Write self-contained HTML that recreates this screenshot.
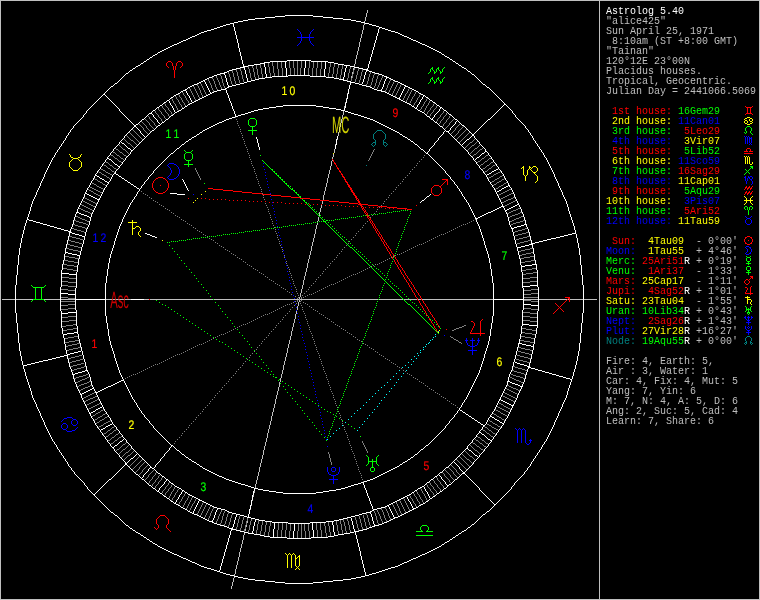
<!DOCTYPE html>
<html lang="en">
<head>
<meta charset="utf-8">
<title>Astrolog 5.40 - alice425</title>
<style>
html,body{margin:0;padding:0;background:#000;}
body{width:760px;height:600px;overflow:hidden;position:relative;}
#chart{position:absolute;left:0;top:0;display:block;will-change:transform;}
#info{position:absolute;left:605.5px;top:7px;margin:0;width:154px;
 font-family:"Liberation Mono",monospace;font-size:10px;line-height:10px;
 color:#bfbfbf;letter-spacing:0;}
#info div{height:10px;white-space:pre;}
#info{will-change:transform;}
.w{color:#fff}.r{color:#f00}.y{color:#ff0}.g{color:#0f0}.b{color:#00f}.c{color:#007f7f}.l{color:#bfbfbf}
</style>
</head>
<body>
<svg id="chart" width="760" height="600" viewBox="0 0 760 600" shape-rendering="crispEdges" fill="none" stroke-width="1" stroke-linecap="butt">
<g transform="translate(0 .5)">
<path stroke="#bfbfbf" d="M367 10h1M367 11h1M367 12h1M366 13h1M366 14h1M366 15h1M366 16h1M365 17h1M365 18h1M365 19h1M365 20h1M364 21h1M364 22h1M364 23h1M364 24h1M363 25h1M363 26h1M363 27h1M363 28h1M363 29h1M362 30h1M362 31h1M362 32h1M362 33h1M361 34h1M361 35h1M361 36h1M361 37h1M360 38h1M360 39h1M360 40h1M360 41h1M359 42h1M359 43h1M359 44h1M359 45h1M359 46h1M358 47h1M358 48h1M358 49h1M358 50h1M357 51h1M357 52h1M357 53h1M357 54h1M356 55h1M356 56h1M356 57h1M356 58h1M355 59h1M355 60h1M355 61h1M355 62h1M355 63h1M354 64h1M354 65h1M354 66h1M354 67h1M353 68h1M353 69h1M353 70h1M353 71h1M352 72h1M352 73h1M352 74h1M352 75h1M351 76h1M351 77h1M351 78h1M351 79h1M351 80h1M350 81h1M350 82h1M350 83h1M350 84h1M349 85h1M349 86h1M349 87h1M349 88h1M348 89h1M348 90h1M348 91h1M348 92h1M347 93h1M347 94h1M347 95h1M347 96h1M347 97h1M346 98h1M346 99h1M346 100h1M346 101h1M345 102h1M345 103h1M345 104h1M345 105h1M344 106h1M344 107h1M344 108h1M344 109h1M343 110h1M343 111h1M343 112h1M343 113h1M343 114h1M342 115h1M342 116h1M342 117h1M342 118h1M341 119h1M341 120h1M341 121h1M341 122h1M340 123h1M340 124h1M340 125h1M340 126h1M339 127h1M339 128h1M339 129h1M339 130h1M339 131h1M338 132h1M338 133h1M338 134h1M338 135h1M337 136h1M337 137h1M337 138h1M337 139h1M336 140h1M336 141h1M336 142h1M336 143h1M335 144h1M335 145h1M335 146h1M335 147h1M335 148h1M334 149h1M334 150h1M334 151h1M334 152h1M333 153h1M333 154h1M333 155h1M333 156h1M332 157h1M332 158h1M332 159h1M332 160h1M331 161h1M331 162h1M331 163h1M331 164h1M331 165h1M330 166h1M330 167h1M330 168h1M330 169h1M329 170h1M329 171h1M329 172h1M329 173h1M328 174h1M328 175h1M328 176h1M328 177h1M327 178h1M327 179h1M327 180h1M327 181h1M327 182h1M326 183h1M326 184h1M326 185h1M326 186h1M325 187h1M325 188h1M325 189h1M325 190h1M324 191h1M324 192h1M324 193h1M324 194h1M323 195h1M323 196h1M323 197h1M323 198h1M323 199h1M322 200h1M322 201h1M322 202h1M322 203h1M321 204h1M321 205h1M321 206h1M321 207h1M320 208h1M320 209h1M320 210h1M320 211h1M319 212h1M319 213h1M319 214h1M319 215h1M319 216h1M318 217h1M318 218h1M318 219h1M318 220h1M317 221h1M317 222h1M317 223h1M317 224h1M316 225h1M316 226h1M316 227h1M316 228h1M315 229h1M315 230h1M315 231h1M315 232h1M315 233h1M314 234h1M314 235h1M314 236h1M314 237h1M313 238h1M313 239h1M313 240h1M313 241h1M312 242h1M312 243h1M312 244h1M312 245h1M311 246h1M311 247h1M311 248h1M311 249h1M311 250h1M310 251h1M310 252h1M310 253h1M310 254h1M309 255h1M309 256h1M309 257h1M309 258h1M308 259h1M308 260h1M308 261h1M308 262h1M307 263h1M307 264h1M307 265h1M307 266h1M307 267h1M306 268h1M306 269h1M306 270h1M306 271h1M305 272h1M305 273h1M305 274h1M305 275h1M304 276h1M304 277h1M304 278h1M304 279h1M303 280h1M303 281h1M303 282h1M303 283h1M303 284h1M302 285h1M302 286h1M302 287h1M302 288h1M301 289h1M301 290h1M301 291h1M301 292h1M300 293h1M300 294h1M300 295h1M300 296h1M299 297h1M299 298h1M2 299h595M299 300h1M299 301h1M298 302h1M298 303h1M298 304h1M298 305h1M297 306h1M297 307h1M297 308h1M297 309h1M296 310h1M296 311h1M296 312h1M296 313h1M295 314h1M295 315h1M295 316h1M295 317h1M295 318h1M294 319h1M294 320h1M294 321h1M294 322h1M293 323h1M293 324h1M293 325h1M293 326h1M292 327h1M292 328h1M292 329h1M292 330h1M291 331h1M291 332h1M291 333h1M291 334h1M291 335h1M290 336h1M290 337h1M290 338h1M290 339h1M289 340h1M289 341h1M289 342h1M289 343h1M288 344h1M288 345h1M288 346h1M288 347h1M287 348h1M287 349h1M287 350h1M287 351h1M287 352h1M286 353h1M286 354h1M286 355h1M286 356h1M285 357h1M285 358h1M285 359h1M285 360h1M284 361h1M284 362h1M284 363h1M284 364h1M283 365h1M283 366h1M283 367h1M283 368h1M283 369h1M282 370h1M282 371h1M282 372h1M282 373h1M281 374h1M281 375h1M281 376h1M281 377h1M280 378h1M280 379h1M280 380h1M280 381h1M279 382h1M279 383h1M279 384h1M279 385h1M279 386h1M278 387h1M278 388h1M278 389h1M278 390h1M277 391h1M277 392h1M277 393h1M277 394h1M276 395h1M276 396h1M276 397h1M276 398h1M275 399h1M275 400h1M275 401h1M275 402h1M275 403h1M274 404h1M274 405h1M274 406h1M274 407h1M273 408h1M273 409h1M273 410h1M273 411h1M272 412h1M272 413h1M272 414h1M272 415h1M271 416h1M271 417h1M271 418h1M271 419h1M271 420h1M270 421h1M270 422h1M270 423h1M270 424h1M269 425h1M269 426h1M269 427h1M269 428h1M268 429h1M268 430h1M268 431h1M268 432h1M267 433h1M267 434h1M267 435h1M267 436h1M267 437h1M266 438h1M266 439h1M266 440h1M266 441h1M265 442h1M265 443h1M265 444h1M265 445h1M264 446h1M264 447h1M264 448h1M264 449h1M263 450h1M263 451h1M263 452h1M263 453h1M263 454h1M262 455h1M262 456h1M262 457h1M262 458h1M261 459h1M261 460h1M261 461h1M261 462h1M260 463h1M260 464h1M260 465h1M260 466h1M259 467h1M259 468h1M259 469h1M259 470h1M259 471h1M258 472h1M258 473h1M258 474h1M258 475h1M257 476h1M257 477h1M257 478h1M257 479h1M256 480h1M256 481h1M256 482h1M256 483h1M255 484h1M255 485h1M255 486h1M255 487h1M255 488h1M254 489h1M254 490h1M254 491h1M254 492h1M253 493h1M253 494h1M253 495h1M253 496h1M252 497h1M252 498h1M252 499h1M252 500h1M251 501h1M251 502h1M251 503h1M251 504h1M251 505h1M250 506h1M250 507h1M250 508h1M250 509h1M249 510h1M249 511h1M249 512h1M249 513h1M248 514h1M248 515h1M248 516h1M248 517h1M247 518h1M247 519h1M247 520h1M247 521h1M247 522h1M246 523h1M246 524h1M246 525h1M246 526h1M245 527h1M245 528h1M245 529h1M245 530h1M244 531h1M244 532h1M244 533h1M244 534h1M243 535h1M243 536h1M243 537h1M243 538h1M243 539h1M242 540h1M242 541h1M242 542h1M242 543h1M241 544h1M241 545h1M241 546h1M241 547h1M240 548h1M240 549h1M240 550h1M240 551h1M239 552h1M239 553h1M239 554h1M239 555h1M239 556h1M238 557h1M238 558h1M238 559h1M238 560h1M237 561h1M237 562h1M237 563h1M237 564h1M236 565h1M236 566h1M236 567h1M236 568h1M235 569h1M235 570h1M235 571h1M235 572h1M235 573h1M234 574h1M234 575h1M234 576h1M234 577h1M233 578h1M233 579h1M233 580h1M233 581h1M232 582h1M232 583h1M232 584h1M232 585h1M231 586h1M231 587h1M231 588h1"/>
<path stroke="#7f7f7f" d="M281 61h1M289 61h1M293 61h1M297 61h1M301 61h1M309 61h1M313 61h1M317 61h1M272 62h1M277 62h1M281 62h1M289 62h1M293 62h1M297 62h1M301 62h1M309 62h1M313 62h1M317 62h1M321 62h1M268 63h1M272 63h1M277 63h1M281 63h1M289 63h1M293 63h1M297 63h1M301 63h1M309 63h1M313 63h1M317 63h1M321 63h1M330 63h1M334 63h1M260 64h1M268 64h1M272 64h1M277 64h1M281 64h1M289 64h1M293 64h1M297 64h1M301 64h1M309 64h1M313 64h1M317 64h1M321 64h1M330 64h1M334 64h1M338 64h1M252 65h1M256 65h1M260 65h1M268 65h1M272 65h1M277 65h1M281 65h1M289 65h1M293 65h1M297 65h1M301 65h1M309 65h1M313 65h1M317 65h1M321 65h1M330 65h1M334 65h1M338 65h1M342 65h1M248 66h1M252 66h1M256 66h1M260 66h1M268 66h1M273 66h1M277 66h1M281 66h1M289 66h1M293 66h1M297 66h1M301 66h1M309 66h1M313 66h1M317 66h1M321 66h1M330 66h1M334 66h1M338 66h1M342 66h1M350 66h1M248 67h1M252 67h1M256 67h1M260 67h1M269 67h1M273 67h1M277 67h1M281 67h1M289 67h1M293 67h1M297 67h1M301 67h1M309 67h1M313 67h1M317 67h1M321 67h1M329 67h1M333 67h1M338 67h1M342 67h1M350 67h1M354 67h1M240 68h1M248 68h1M253 68h1M256 68h1M261 68h1M269 68h1M273 68h1M277 68h1M282 68h1M290 68h1M294 68h1M297 68h1M300 68h1M308 68h1M312 68h1M316 68h1M321 68h1M329 68h1M333 68h1M337 68h1M342 68h1M350 68h1M354 68h1M358 68h1M236 69h1M240 69h1M249 69h1M253 69h1M257 69h1M261 69h1M269 69h1M273 69h1M278 69h1M282 69h1M290 69h1M294 69h1M297 69h1M300 69h1M308 69h1M312 69h1M316 69h1M320 69h1M329 69h1M333 69h1M337 69h1M341 69h1M349 69h1M354 69h1M358 69h1M362 69h1M232 70h1M236 70h1M240 70h1M249 70h1M253 70h1M257 70h1M261 70h1M269 70h1M273 70h1M278 70h1M282 70h1M290 70h1M294 70h1M297 70h1M300 70h1M308 70h1M312 70h1M316 70h1M320 70h1M329 70h1M333 70h1M337 70h1M341 70h1M349 70h1M353 70h1M358 70h1M362 70h1M232 71h1M236 71h1M241 71h1M249 71h1M253 71h1M257 71h1M261 71h1M269 71h1M273 71h1M278 71h1M282 71h1M290 71h1M294 71h1M297 71h1M300 71h1M308 71h1M312 71h1M316 71h1M320 71h1M329 71h1M333 71h1M337 71h1M341 71h1M349 71h1M353 71h1M357 71h1M362 71h1M228 72h1M232 72h1M237 72h1M241 72h1M249 72h1M254 72h1M257 72h1M261 72h1M269 72h1M273 72h1M278 72h1M282 72h1M290 72h1M294 72h1M297 72h1M300 72h1M308 72h1M312 72h1M316 72h1M320 72h1M329 72h1M333 72h1M337 72h1M341 72h1M349 72h1M353 72h1M357 72h1M361 72h1M370 72h1M228 73h1M233 73h1M237 73h1M241 73h1M250 73h1M254 73h1M257 73h1M261 73h1M270 73h1M274 73h1M278 73h1M282 73h1M290 73h1M294 73h1M297 73h1M300 73h1M308 73h1M312 73h1M316 73h1M320 73h1M328 73h1M333 73h1M337 73h1M341 73h1M348 73h1M353 73h1M357 73h1M361 73h1M370 73h1M374 73h1M220 74h1M229 74h1M233 74h1M237 74h1M241 74h1M250 74h1M254 74h1M257 74h1M262 74h1M270 74h1M274 74h1M278 74h1M282 74h1M290 74h1M294 74h1M297 74h1M300 74h1M308 74h1M312 74h1M316 74h1M320 74h1M328 74h1M332 74h1M336 74h1M341 74h1M348 74h1M352 74h1M357 74h1M361 74h1M369 74h1M374 74h1M378 74h1M220 75h1M229 75h1M233 75h1M237 75h1M242 75h1M250 75h1M254 75h1M258 75h1M262 75h1M270 75h1M274 75h1M278 75h1M282 75h1M312 75h1M316 75h1M320 75h1M328 75h1M332 75h1M336 75h1M340 75h1M348 75h1M352 75h1M356 75h1M361 75h1M369 75h1M373 75h1M378 75h1M216 76h1M221 76h1M229 76h1M233 76h1M238 76h1M242 76h1M250 76h1M254 76h1M258 76h1M262 76h1M270 76h1M274 76h1M328 76h1M332 76h1M336 76h1M340 76h1M348 76h1M352 76h1M356 76h1M360 76h1M369 76h1M373 76h1M377 76h1M382 76h1M212 77h1M216 77h1M221 77h1M230 77h1M234 77h1M238 77h1M242 77h1M250 77h1M255 77h1M258 77h1M262 77h1M332 77h1M336 77h1M340 77h1M348 77h1M352 77h1M356 77h1M360 77h1M368 77h1M373 77h1M377 77h1M382 77h1M212 78h1M217 78h1M221 78h1M230 78h1M234 78h1M238 78h1M242 78h1M251 78h1M255 78h1M258 78h1M340 78h1M347 78h1M351 78h1M356 78h1M360 78h1M368 78h1M372 78h1M377 78h1M381 78h1M208 79h1M213 79h1M217 79h1M222 79h1M230 79h1M234 79h1M238 79h1M243 79h1M251 79h1M255 79h1M347 79h1M351 79h1M355 79h1M360 79h1M368 79h1M372 79h1M376 79h1M381 79h1M390 79h1M208 80h1M213 80h1M218 80h1M222 80h1M230 80h1M234 80h1M239 80h1M243 80h1M251 80h1M347 80h1M351 80h1M355 80h1M359 80h1M368 80h1M372 80h1M376 80h1M380 80h1M390 80h1M394 80h1M209 81h1M214 81h1M218 81h1M222 81h1M231 81h1M235 81h1M239 81h1M243 81h1M355 81h1M359 81h1M367 81h1M372 81h1M376 81h1M380 81h1M389 81h1M394 81h1M200 82h1M209 82h1M214 82h1M219 82h1M222 82h1M231 82h1M235 82h1M239 82h1M359 82h1M367 82h1M371 82h1M376 82h1M379 82h1M389 82h1M393 82h1M398 82h1M200 83h1M210 83h1M214 83h1M219 83h1M223 83h1M231 83h1M235 83h1M367 83h1M371 83h1M375 83h1M379 83h1M388 83h1M393 83h1M397 83h1M197 84h1M201 84h1M210 84h1M215 84h1M219 84h1M223 84h1M232 84h1M366 84h1M371 84h1M375 84h1M379 84h1M388 84h1M392 84h1M397 84h1M401 84h1M197 85h1M201 85h1M211 85h1M215 85h1M220 85h1M223 85h1M232 85h1M366 85h1M370 85h1M375 85h1M378 85h1M387 85h1M392 85h1M396 85h1M400 85h1M193 86h1M198 86h1M202 86h1M211 86h1M215 86h1M220 86h1M224 86h1M370 86h1M374 86h1M378 86h1M387 86h1M391 86h1M396 86h1M400 86h1M194 87h1M198 87h1M202 87h1M211 87h1M216 87h1M221 87h1M224 87h1M374 87h1M377 87h1M387 87h1M391 87h1M395 87h1M399 87h1M189 88h1M194 88h1M199 88h1M203 88h1M212 88h1M216 88h1M221 88h1M377 88h1M386 88h1M390 88h1M395 88h1M399 88h1M409 88h1M190 89h1M195 89h1M199 89h1M203 89h1M212 89h1M217 89h1M386 89h1M390 89h1M394 89h1M398 89h1M408 89h1M412 89h1M190 90h1M195 90h1M200 90h1M204 90h1M213 90h1M217 90h1M385 90h1M389 90h1M394 90h1M398 90h1M408 90h1M411 90h1M191 91h1M196 91h1M200 91h1M204 91h1M213 91h1M385 91h1M389 91h1M393 91h1M397 91h1M407 91h1M411 91h1M416 91h1M182 92h1M191 92h1M196 92h1M200 92h1M205 92h1M388 92h1M393 92h1M397 92h1M407 92h1M410 92h1M415 92h1M183 93h1M192 93h1M197 93h1M201 93h1M205 93h1M388 93h1M392 93h1M396 93h1M406 93h1M410 93h1M415 93h1M178 94h1M183 94h1M192 94h1M197 94h1M201 94h1M206 94h1M392 94h1M396 94h1M405 94h1M409 94h1M414 94h1M420 94h1M179 95h1M184 95h1M193 95h1M198 95h1M202 95h1M206 95h1M395 95h1M405 95h1M409 95h1M414 95h1M419 95h1M175 96h1M179 96h1M185 96h1M193 96h1M198 96h1M202 96h1M395 96h1M404 96h1M408 96h1M413 96h1M419 96h1M176 97h1M180 97h1M185 97h1M194 97h1M199 97h1M404 97h1M408 97h1M412 97h1M418 97h1M171 98h1M176 98h1M181 98h1M186 98h1M194 98h1M199 98h1M403 98h1M407 98h1M412 98h1M417 98h1M427 98h1M172 99h1M177 99h1M181 99h1M186 99h1M195 99h1M403 99h1M407 99h1M411 99h1M417 99h1M426 99h1M172 100h1M178 100h1M182 100h1M187 100h1M195 100h1M402 100h1M406 100h1M411 100h1M416 100h1M426 100h1M430 100h1M173 101h1M178 101h1M182 101h1M188 101h1M406 101h1M410 101h1M416 101h1M425 101h1M429 101h1M173 102h1M179 102h1M183 102h1M188 102h1M410 102h1M415 102h1M424 102h1M429 102h1M164 103h1M174 103h1M179 103h1M184 103h1M189 103h1M409 103h1M414 103h1M424 103h1M428 103h1M434 103h1M165 104h1M175 104h1M180 104h1M184 104h1M414 104h1M423 104h1M428 104h1M433 104h1M161 105h1M165 105h1M175 105h1M181 105h1M185 105h1M413 105h1M423 105h1M427 105h1M433 105h1M437 105h1M162 106h1M166 106h1M176 106h1M181 106h1M422 106h1M426 106h1M432 106h1M436 106h1M157 107h1M162 107h1M167 107h1M176 107h1M182 107h1M421 107h1M426 107h1M431 107h1M436 107h1M158 108h1M163 108h1M168 108h1M177 108h1M421 108h1M425 108h1M430 108h1M435 108h1M158 109h1M164 109h1M168 109h1M177 109h1M420 109h1M425 109h1M430 109h1M434 109h1M154 110h1M159 110h1M165 110h1M169 110h1M178 110h1M424 110h1M429 110h1M433 110h1M444 110h1M155 111h1M160 111h1M165 111h1M170 111h1M424 111h1M428 111h1M433 111h1M443 111h1M155 112h1M161 112h1M166 112h1M171 112h1M423 112h1M427 112h1M432 112h1M443 112h1M447 112h1M156 113h1M161 113h1M167 113h1M171 113h1M427 113h1M431 113h1M442 113h1M446 113h1M157 114h1M162 114h1M168 114h1M172 114h1M426 114h1M430 114h1M441 114h1M446 114h1M147 115h1M158 115h1M163 115h1M168 115h1M430 115h1M440 115h1M445 115h1M450 115h1M148 116h1M158 116h1M164 116h1M169 116h1M429 116h1M440 116h1M444 116h1M449 116h1M149 117h1M159 117h1M164 117h1M439 117h1M443 117h1M449 117h1M144 118h1M149 118h1M160 118h1M165 118h1M438 118h1M443 118h1M448 118h1M454 118h1M145 119h1M150 119h1M161 119h1M437 119h1M442 119h1M447 119h1M453 119h1M146 120h1M151 120h1M161 120h1M437 120h1M441 120h1M446 120h1M452 120h1M141 121h1M147 121h1M152 121h1M162 121h1M436 121h1M440 121h1M446 121h1M451 121h1M142 122h1M148 122h1M153 122h1M440 122h1M445 122h1M450 122h1M138 123h1M143 123h1M149 123h1M154 123h1M439 123h1M444 123h1M449 123h1M460 123h1M139 124h1M144 124h1M149 124h1M154 124h1M443 124h1M449 124h1M459 124h1M140 125h1M145 125h1M150 125h1M155 125h1M443 125h1M448 125h1M458 125h1M141 126h1M146 126h1M151 126h1M156 126h1M442 126h1M447 126h1M457 126h1M463 126h1M142 127h1M146 127h1M152 127h1M446 127h1M456 127h1M462 127h1M143 128h1M147 128h1M153 128h1M445 128h1M455 128h1M461 128h1M132 129h1M143 129h1M148 129h1M455 129h1M460 129h1M466 129h1M133 130h1M144 130h1M149 130h1M454 130h1M459 130h1M465 130h1M134 131h1M145 131h1M150 131h1M453 131h1M458 131h1M464 131h1M129 132h1M135 132h1M146 132h1M452 132h1M458 132h1M463 132h1M469 132h1M130 133h1M136 133h1M147 133h1M451 133h1M457 133h1M462 133h1M468 133h1M131 134h1M137 134h1M456 134h1M461 134h1M467 134h1M126 135h1M132 135h1M138 135h1M455 135h1M460 135h1M466 135h1M127 136h1M133 136h1M139 136h1M454 136h1M459 136h1M465 136h1M128 137h1M134 137h1M140 137h1M458 137h1M464 137h1M123 138h1M129 138h1M135 138h1M141 138h1M457 138h1M463 138h1M475 138h1M124 139h1M130 139h1M136 139h1M142 139h1M456 139h1M462 139h1M474 139h1M125 140h1M131 140h2M137 140h1M461 140h1M473 140h1M126 141h1M133 141h1M138 141h1M460 141h1M472 141h1M477 141h1M127 142h1M134 142h1M139 142h1M459 142h1M470 142h2M476 142h1M128 143h2M135 143h1M469 143h1M475 143h1M118 144h1M130 144h1M136 144h1M468 144h1M474 144h1M480 144h1M119 145h1M131 145h1M467 145h1M472 145h2M479 145h1M120 146h1M132 146h1M466 146h1M471 146h1M478 146h1M121 147h1M133 147h1M465 147h1M470 147h1M477 147h1M483 147h1M115 148h1M122 148h1M469 148h1M475 148h2M482 148h1M116 149h2M123 149h2M468 149h1M474 149h1M480 149h2M118 150h1M125 150h1M467 150h1M473 150h1M479 150h1M112 151h1M119 151h1M126 151h1M472 151h1M478 151h1M113 152h2M120 152h2M127 152h1M471 152h1M477 152h1M115 153h1M122 153h1M128 153h1M470 153h1M476 153h1M110 154h1M116 154h1M123 154h1M474 154h2M488 154h1M111 155h2M117 155h2M124 155h2M473 155h1M486 155h2M113 156h1M119 156h1M126 156h1M472 156h1M485 156h1M114 157h1M120 157h1M484 157h1M491 157h1M115 158h2M121 158h2M482 158h2M489 158h2M117 159h1M123 159h1M481 159h1M488 159h1M118 160h1M480 160h1M487 160h1M105 161h1M119 161h2M478 161h2M485 161h2M493 161h1M106 162h2M121 162h1M477 162h1M484 162h1M491 162h2M108 163h1M483 163h1M490 163h1M103 164h1M109 164h1M481 164h2M489 164h1M495 164h1M104 165h2M110 165h2M480 165h1M487 165h2M493 165h2M106 166h1M112 166h1M486 166h1M492 166h1M107 167h1M113 167h1M485 167h1M491 167h1M100 168h1M108 168h2M114 168h2M483 168h2M489 168h2M101 169h2M110 169h1M116 169h1M482 169h1M488 169h1M103 170h2M111 170h1M487 170h1M98 171h1M105 171h1M112 171h2M485 171h2M500 171h1M99 172h2M106 172h2M114 172h1M484 172h1M498 172h2M101 173h1M108 173h2M496 173h2M102 174h2M110 174h2M494 174h2M104 175h2M112 175h1M493 175h1M502 175h1M106 176h1M491 176h2M500 176h2M107 177h2M489 177h2M499 177h1M94 178h1M109 178h1M488 178h1M497 178h2M504 178h1M95 179h2M495 179h2M502 179h2M97 180h1M494 180h1M501 180h1M98 181h2M492 181h2M499 181h2M91 182h1M100 182h2M491 182h1M497 182h2M506 182h1M92 183h2M102 183h1M496 183h1M504 183h2M94 184h2M103 184h2M494 184h2M503 184h1M96 185h1M105 185h1M493 185h1M501 185h2M89 186h1M97 186h2M499 186h2M90 187h2M99 187h2M498 187h1M92 188h2M101 188h2M496 188h2M88 189h1M94 189h2M103 189h1M495 189h1M509 189h2M89 190h2M96 190h2M507 190h2M91 191h2M98 191h2M505 191h2M93 192h1M100 192h2M503 192h2M94 193h2M501 193h2M511 193h2M96 194h2M499 194h2M509 194h2M98 195h2M498 195h1M507 195h2M100 196h1M505 196h2M84 197h1M503 197h2M513 197h2M85 198h2M501 198h2M511 198h2M87 199h2M500 199h1M508 199h3M82 200h1M89 200h2M506 200h2M515 200h2M83 201h2M91 201h2M504 201h2M513 201h2M85 202h2M93 202h2M502 202h2M511 202h2M87 203h2M95 203h2M509 203h2M80 204h2M89 204h2M507 204h2M82 205h2M91 205h2M505 205h2M84 206h2M93 206h2M503 206h2M86 207h2M79 208h2M88 208h2M518 208h2M81 209h2M90 209h2M516 209h2M83 210h2M92 210h2M513 210h3M85 211h3M511 211h2M88 212h2M509 212h2M520 212h2M90 213h2M507 213h2M518 213h2M515 214h3M512 215h3M76 216h2M510 216h2M521 216h2M78 217h2M508 217h2M519 217h2M80 218h2M516 218h3M82 219h3M514 219h2M74 220h2M85 220h2M512 220h2M523 220h2M76 221h3M87 221h2M510 221h2M520 221h3M79 222h4M516 222h4M83 223h3M513 223h3M73 224h2M86 224h2M511 224h2M75 225h3M78 226h4M82 227h3M72 228h2M85 228h2M525 228h2M74 229h3M522 229h3M77 230h4M518 230h4M81 231h3M515 231h3M84 232h2M513 232h2M526 232h3M522 233h4M518 234h4M515 235h3M69 236h3M527 236h3M72 237h4M523 237h4M76 238h4M519 238h4M80 239h3M516 239h3M68 240h3M528 240h3M71 241h4M524 241h4M75 242h4M520 242h4M79 243h3M517 243h3M67 244h3M70 245h4M74 246h4M78 247h3M66 248h3M530 248h3M69 249h4M525 249h5M73 250h5M521 250h4M78 251h3M518 251h3M531 252h3M526 253h5M522 254h4M519 255h3M65 256h4M530 256h4M69 257h6M524 257h6M75 258h4M520 258h4M64 260h4M531 260h4M68 261h6M525 261h6M74 262h4M521 262h4M63 264h4M67 265h7M74 266h4M63 268h4M532 268h4M67 269h6M526 269h6M73 270h4M522 270h4M533 272h4M526 273h7M522 274h4M62 277h7M530 277h7M69 278h7M523 278h7M61 281h7M530 281h8M68 282h8M523 282h7M61 285h7M68 286h8M61 289h7M531 289h7M68 290h7M524 290h7M531 293h7M524 294h7M61 297h7M524 297h14M68 298h7M524 300h7M61 301h14M531 301h7M68 304h7M61 305h7M68 308h7M524 308h7M61 309h7M531 309h7M523 312h7M530 313h8M68 316h8M523 316h7M61 317h7M530 317h8M69 320h7M523 320h7M62 321h7M530 321h7M73 324h4M66 325h7M62 326h4M73 328h4M522 328h4M67 329h6M526 329h6M63 330h4M532 330h4M521 332h4M525 333h7M532 334h4M74 336h4M521 336h4M68 337h6M525 337h6M64 338h4M531 338h4M75 340h4M520 340h4M69 341h6M524 341h6M65 342h4M530 342h4M77 343h3M72 344h5M68 345h4M65 346h3M78 347h3M518 347h3M73 348h5M521 348h4M69 349h4M525 349h5M66 350h3M530 350h3M518 351h3M521 352h4M525 353h4M529 354h3M79 355h3M517 355h3M75 356h4M520 356h4M71 357h4M524 357h4M68 358h3M528 358h3M80 359h3M516 359h3M76 360h4M519 360h4M72 361h4M523 361h4M69 362h3M527 362h3M81 363h3M77 364h4M73 365h4M70 366h3M84 366h2M513 366h2M81 367h3M515 367h3M77 368h4M518 368h4M74 369h3M522 369h3M72 370h2M512 370h2M525 370h2M514 371h3M517 372h4M521 373h3M86 374h2M511 374h2M524 374h2M83 375h3M513 375h3M79 376h4M516 376h4M76 377h3M87 377h2M510 377h2M520 377h3M74 378h2M85 378h2M512 378h2M523 378h2M82 379h3M514 379h2M80 380h2M516 380h3M78 381h2M89 381h2M519 381h2M76 382h2M87 382h2M521 382h2M84 383h3M81 384h3M79 385h2M90 385h2M507 385h2M77 386h2M88 386h2M509 386h2M85 387h3M511 387h2M83 388h2M505 388h2M513 388h3M81 389h2M507 389h2M516 389h2M79 390h2M509 390h2M518 390h2M511 391h2M94 392h2M504 392h1M513 392h2M92 393h2M505 393h2M515 393h2M90 394h2M507 394h2M517 394h2M88 395h2M502 395h1M509 395h2M86 396h2M95 396h2M503 396h2M511 396h2M84 397h2M93 397h2M505 397h2M513 397h2M82 398h2M90 398h3M507 398h2M515 398h2M88 399h2M97 399h2M509 399h2M86 400h2M95 400h2M511 400h2M84 401h2M93 401h2M513 401h2M91 402h2M498 402h1M89 403h2M99 403h2M499 403h2M87 404h2M97 404h2M501 404h2M86 405h1M95 405h2M503 405h1M93 406h2M497 406h1M504 406h2M91 407h2M498 407h2M506 407h2M89 408h2M500 408h2M508 408h2M88 409h1M103 409h1M495 409h1M502 409h2M510 409h1M101 410h2M496 410h2M504 410h2M100 411h1M498 411h2M506 411h2M98 412h2M500 412h1M508 412h2M96 413h2M105 413h1M493 413h1M501 413h2M95 414h1M103 414h2M494 414h2M503 414h2M93 415h2M102 415h1M496 415h1M505 415h2M92 416h1M100 416h2M107 416h1M497 416h2M507 416h1M98 417h2M105 417h2M499 417h2M97 418h1M104 418h1M501 418h1M95 419h2M102 419h2M502 419h2M94 420h1M100 420h2M110 420h1M489 420h1M504 420h1M99 421h1M108 421h2M490 421h2M97 422h2M106 422h2M492 422h1M96 423h1M104 423h2M486 423h1M493 423h2M103 424h1M487 424h2M495 424h2M101 425h2M489 425h2M497 425h1M99 426h2M114 426h1M484 426h1M491 426h1M498 426h2M98 427h1M112 427h2M485 427h2M492 427h2M500 427h1M111 428h1M487 428h1M494 428h2M110 429h1M116 429h1M482 429h1M488 429h1M496 429h2M108 430h2M114 430h2M483 430h2M489 430h2M498 430h1M107 431h1M113 431h1M485 431h1M491 431h1M106 432h1M112 432h1M486 432h1M492 432h1M104 433h2M110 433h2M118 433h1M487 433h2M493 433h2M103 434h1M109 434h1M116 434h2M489 434h1M495 434h1M108 435h1M115 435h1M490 435h1M106 436h2M114 436h1M121 436h1M477 436h1M491 436h2M105 437h1M112 437h2M119 437h2M478 437h2M493 437h1M111 438h1M118 438h1M480 438h1M110 439h1M117 439h1M475 439h1M481 439h1M108 440h2M115 440h2M476 440h2M482 440h2M107 441h1M114 441h1M478 441h1M484 441h1M113 442h1M126 442h1M472 442h1M479 442h1M485 442h1M111 443h2M125 443h1M473 443h2M480 443h2M486 443h2M110 444h1M123 444h2M475 444h1M482 444h1M488 444h1M122 445h1M128 445h1M470 445h1M476 445h1M483 445h1M121 446h1M127 446h1M471 446h1M477 446h2M484 446h2M120 447h1M126 447h1M472 447h1M479 447h1M486 447h1M119 448h1M125 448h1M131 448h1M473 448h1M480 448h1M117 449h2M123 449h2M130 449h1M474 449h1M481 449h2M116 450h1M122 450h1M129 450h1M475 450h2M483 450h1M115 451h1M121 451h1M128 451h1M133 451h1M465 451h1M477 451h1M120 452h1M126 452h2M132 452h1M466 452h1M478 452h1M119 453h1M125 453h1M131 453h1M467 453h1M479 453h1M118 454h1M124 454h1M130 454h1M462 454h1M468 454h1M480 454h1M123 455h1M128 455h2M463 455h1M469 455h1M122 456h1M127 456h1M139 456h1M459 456h1M464 456h1M470 456h2M121 457h1M126 457h1M138 457h1M460 457h1M465 457h1M472 457h1M125 458h1M137 458h1M461 458h1M466 458h1M473 458h1M124 459h1M136 459h1M142 459h1M456 459h1M462 459h1M467 459h2M474 459h1M123 460h1M135 460h1M141 460h1M457 460h1M463 460h1M469 460h1M475 460h1M134 461h1M140 461h1M458 461h1M464 461h1M470 461h1M133 462h1M139 462h1M144 462h1M459 462h1M465 462h1M471 462h1M132 463h1M138 463h1M143 463h1M460 463h1M466 463h1M472 463h1M131 464h1M137 464h1M142 464h1M461 464h1M467 464h1M130 465h1M136 465h1M141 465h1M147 465h1M451 465h1M462 465h1M468 465h1M129 466h1M135 466h1M140 466h1M146 466h1M452 466h1M463 466h1M469 466h1M134 467h1M139 467h1M145 467h1M448 467h1M453 467h1M464 467h1M133 468h1M139 468h1M144 468h1M449 468h1M454 468h1M465 468h1M132 469h1M138 469h1M143 469h1M450 469h1M455 469h1M466 469h1M137 470h1M142 470h1M153 470h1M445 470h1M451 470h1M456 470h1M136 471h1M142 471h1M152 471h1M446 471h1M452 471h1M456 471h1M135 472h1M141 472h1M151 472h1M156 472h1M442 472h1M447 472h1M453 472h1M457 472h1M140 473h1M150 473h1M155 473h1M443 473h1M448 473h1M453 473h1M458 473h1M139 474h1M149 474h1M155 474h1M444 474h1M449 474h1M454 474h1M459 474h1M138 475h1M148 475h1M154 475h1M159 475h1M444 475h1M450 475h1M455 475h1M460 475h1M148 476h1M153 476h1M158 476h1M445 476h1M450 476h1M456 476h1M147 477h1M152 477h1M158 477h1M162 477h1M436 477h1M446 477h1M451 477h1M457 477h1M146 478h1M152 478h1M157 478h1M161 478h1M437 478h1M447 478h1M452 478h1M145 479h1M151 479h1M156 479h1M161 479h1M437 479h1M448 479h1M453 479h1M144 480h1M150 480h1M155 480h1M160 480h1M433 480h1M438 480h1M449 480h1M454 480h1M149 481h1M155 481h1M159 481h1M434 481h1M439 481h1M449 481h1M149 482h1M154 482h1M158 482h1M169 482h1M429 482h1M434 482h1M440 482h1M450 482h1M148 483h1M153 483h1M158 483h1M168 483h1M430 483h1M435 483h1M440 483h1M451 483h1M152 484h1M157 484h1M168 484h1M172 484h1M426 484h1M430 484h1M436 484h1M441 484h1M152 485h1M156 485h1M167 485h1M171 485h1M427 485h1M431 485h1M437 485h1M442 485h1M151 486h1M155 486h1M166 486h1M171 486h1M175 486h1M427 486h1M432 486h1M437 486h1M443 486h1M155 487h1M165 487h1M170 487h1M174 487h1M428 487h1M433 487h1M438 487h1M443 487h1M154 488h1M165 488h1M169 488h1M174 488h1M420 488h1M429 488h1M433 488h1M439 488h1M444 488h1M164 489h1M168 489h1M173 489h1M178 489h1M421 489h1M430 489h1M434 489h1M440 489h1M163 490h1M168 490h1M173 490h1M177 490h1M421 490h1M430 490h1M435 490h1M440 490h1M162 491h1M167 491h1M172 491h1M177 491h1M416 491h1M422 491h1M431 491h1M436 491h1M441 491h1M162 492h1M166 492h1M171 492h1M176 492h1M417 492h1M422 492h1M432 492h1M436 492h1M161 493h1M165 493h1M171 493h1M175 493h1M185 493h1M413 493h1M417 493h1M423 493h1M433 493h1M437 493h1M165 494h1M170 494h1M175 494h1M184 494h1M414 494h1M418 494h1M424 494h1M433 494h1M164 495h1M170 495h1M174 495h1M184 495h1M189 495h1M409 495h1M414 495h1M419 495h1M424 495h1M434 495h1M169 496h1M174 496h1M183 496h1M188 496h1M410 496h1M415 496h1M419 496h1M425 496h1M169 497h1M173 497h1M182 497h1M188 497h1M192 497h1M410 497h1M416 497h1M420 497h1M425 497h1M168 498h1M172 498h1M182 498h1M187 498h1M191 498h1M196 498h1M403 498h1M411 498h1M416 498h1M420 498h1M426 498h1M172 499h1M181 499h1M187 499h1M191 499h1M195 499h1M404 499h1M412 499h1M417 499h1M421 499h1M426 499h1M171 500h1M181 500h1M186 500h1M190 500h1M195 500h1M399 500h1M404 500h1M412 500h1M417 500h1M422 500h1M427 500h1M180 501h1M185 501h1M190 501h1M194 501h1M400 501h1M405 501h1M413 501h1M418 501h1M422 501h1M179 502h1M185 502h1M189 502h1M194 502h1M203 502h1M396 502h1M400 502h1M405 502h1M413 502h1M419 502h1M423 502h1M179 503h1M184 503h1M189 503h1M193 503h1M202 503h1M392 503h1M396 503h1M401 503h1M406 503h1M414 503h1M419 503h1M178 504h1M184 504h1M188 504h1M192 504h1M202 504h1M206 504h1M392 504h1M397 504h1M401 504h1M406 504h1M415 504h1M420 504h1M183 505h1M188 505h1M192 505h1M201 505h1M205 505h1M210 505h1M393 505h1M397 505h1M402 505h1M407 505h1M415 505h1M183 506h1M187 506h1M191 506h1M201 506h1M205 506h1M210 506h1M393 506h1M398 506h1M402 506h1M407 506h1M416 506h1M182 507h1M187 507h1M191 507h1M200 507h1M204 507h1M209 507h1M213 507h1M385 507h1M394 507h1M398 507h1M403 507h1M408 507h1M186 508h1M190 508h1M200 508h1M204 508h1M209 508h1M213 508h1M381 508h1M385 508h1M394 508h1M399 508h1M403 508h1M408 508h1M186 509h1M190 509h1M199 509h1M203 509h1M208 509h1M212 509h1M381 509h1M386 509h1M395 509h1M399 509h1M404 509h1M409 509h1M189 510h1M199 510h1M203 510h1M208 510h1M212 510h1M221 510h1M377 510h1M382 510h1M386 510h1M395 510h1M399 510h1M404 510h1M409 510h1M198 511h1M202 511h1M207 511h1M211 511h1M221 511h1M224 511h1M374 511h1M377 511h1M382 511h1M387 511h1M396 511h1M400 511h1M405 511h1M198 512h1M202 512h1M207 512h1M211 512h1M220 512h1M224 512h1M228 512h1M374 512h1M378 512h1M383 512h1M387 512h1M396 512h1M400 512h1M405 512h1M197 513h1M201 513h1M206 513h1M210 513h1M220 513h1M223 513h1M228 513h1M232 513h1M366 513h1M375 513h1M378 513h1M383 513h1M388 513h1M397 513h1M401 513h1M197 514h1M201 514h1M206 514h1M210 514h1M219 514h1M223 514h1M227 514h1M232 514h1M366 514h1M375 514h1M379 514h1M383 514h1M388 514h1M397 514h1M401 514h1M200 515h1M205 515h1M210 515h1M219 515h1M223 515h1M227 515h1M231 515h1M363 515h1M367 515h1M375 515h1M379 515h1M384 515h1M388 515h1M398 515h1M200 516h1M205 516h1M209 516h1M218 516h1M222 516h1M227 516h1M231 516h1M239 516h1M359 516h1M363 516h1M367 516h1M376 516h1M380 516h1M384 516h1M389 516h1M398 516h1M204 517h1M209 517h1M218 517h1M222 517h1M226 517h1M231 517h1M239 517h1M243 517h1M355 517h1M359 517h1M363 517h1M367 517h1M376 517h1M380 517h1M384 517h1M389 517h1M204 518h1M208 518h1M218 518h1M222 518h1M226 518h1M230 518h1M239 518h1M243 518h1M247 518h1M251 518h1M347 518h1M355 518h1M359 518h1M364 518h1M368 518h1M376 518h1M380 518h1M385 518h1M390 518h1M208 519h1M217 519h1M222 519h1M226 519h1M230 519h1M238 519h1M243 519h1M247 519h1M251 519h1M343 519h1M347 519h1M355 519h1M360 519h1M364 519h1M368 519h1M376 519h1M381 519h1M385 519h1M390 519h1M217 520h1M221 520h1M226 520h1M230 520h1M238 520h1M242 520h1M247 520h1M251 520h1M258 520h1M340 520h1M343 520h1M347 520h1M356 520h1M360 520h1M364 520h1M368 520h1M377 520h1M381 520h1M386 520h1M216 521h1M221 521h1M225 521h1M230 521h1M238 521h1M242 521h1M246 521h1M250 521h1M258 521h1M262 521h1M266 521h1M336 521h1M340 521h1M343 521h1M348 521h1M356 521h1M360 521h1M364 521h1M368 521h1M377 521h1M382 521h1M386 521h1M216 522h1M221 522h1M225 522h1M229 522h1M238 522h1M242 522h1M246 522h1M250 522h1M258 522h1M262 522h1M266 522h1M270 522h1M324 522h1M328 522h1M336 522h1M340 522h1M344 522h1M348 522h1M356 522h1M360 522h1M365 522h1M369 522h1M377 522h1M382 522h1M220 523h1M225 523h1M229 523h1M237 523h1M242 523h1M246 523h1M250 523h1M258 523h1M262 523h1M266 523h1M270 523h1M278 523h1M282 523h1M286 523h1M316 523h1M320 523h1M324 523h1M328 523h1M336 523h1M340 523h1M344 523h1M348 523h1M356 523h1M361 523h1M365 523h1M369 523h1M378 523h1M220 524h1M224 524h1M229 524h1M237 524h1M241 524h1M246 524h1M250 524h1M257 524h1M262 524h1M266 524h1M270 524h1M278 524h1M282 524h1M286 524h1M290 524h1M298 524h1M301 524h1M304 524h1M308 524h1M316 524h1M320 524h1M324 524h1M328 524h1M336 524h1M341 524h1M344 524h1M348 524h1M357 524h1M361 524h1M365 524h1M369 524h1M378 524h1M224 525h1M228 525h1M237 525h1M241 525h1M245 525h1M249 525h1M257 525h1M261 525h1M265 525h1M270 525h1M278 525h1M282 525h1M286 525h1M290 525h1M298 525h1M301 525h1M304 525h1M308 525h1M316 525h1M320 525h1M324 525h1M328 525h1M337 525h1M341 525h1M344 525h1M349 525h1M357 525h1M361 525h1M365 525h1M370 525h1M228 526h1M237 526h1M241 526h1M245 526h1M249 526h1M257 526h1M261 526h1M265 526h1M269 526h1M278 526h1M282 526h1M286 526h1M290 526h1M298 526h1M301 526h1M304 526h1M308 526h1M316 526h1M320 526h1M325 526h1M329 526h1M337 526h1M341 526h1M345 526h1M349 526h1M357 526h1M361 526h1M366 526h1M370 526h1M236 527h1M241 527h1M245 527h1M249 527h1M257 527h1M261 527h1M265 527h1M269 527h1M278 527h1M282 527h1M286 527h1M290 527h1M298 527h1M301 527h1M304 527h1M308 527h1M316 527h1M320 527h1M325 527h1M329 527h1M337 527h1M341 527h1M345 527h1M349 527h1M357 527h1M362 527h1M366 527h1M236 528h1M240 528h1M245 528h1M249 528h1M257 528h1M261 528h1M265 528h1M269 528h1M278 528h1M282 528h1M286 528h1M290 528h1M298 528h1M301 528h1M304 528h1M308 528h1M316 528h1M320 528h1M325 528h1M329 528h1M337 528h1M341 528h1M345 528h1M349 528h1M358 528h1M362 528h1M366 528h1M236 529h1M240 529h1M244 529h1M249 529h1M257 529h1M261 529h1M265 529h1M269 529h1M278 529h1M282 529h1M286 529h1M290 529h1M298 529h1M301 529h1M304 529h1M308 529h1M316 529h1M320 529h1M325 529h1M329 529h1M337 529h1M341 529h1M345 529h1M349 529h1M358 529h1M362 529h1M240 530h1M244 530h1M248 530h1M256 530h1M261 530h1M265 530h1M269 530h1M277 530h1M281 530h1M285 530h1M290 530h1M298 530h1M301 530h1M304 530h1M308 530h1M317 530h1M321 530h1M325 530h1M329 530h1M337 530h1M342 530h1M345 530h1M350 530h1M358 530h1M244 531h1M248 531h1M256 531h1M260 531h1M265 531h1M269 531h1M277 531h1M281 531h1M285 531h1M289 531h1M297 531h1M301 531h1M305 531h1M309 531h1M317 531h1M321 531h1M325 531h1M329 531h1M338 531h1M342 531h1M346 531h1M350 531h1M248 532h1M256 532h1M260 532h1M264 532h1M268 532h1M277 532h1M281 532h1M285 532h1M289 532h1M297 532h1M301 532h1M305 532h1M309 532h1M317 532h1M321 532h1M325 532h1M330 532h1M338 532h1M342 532h1M346 532h1M350 532h1M256 533h1M260 533h1M264 533h1M268 533h1M277 533h1M281 533h1M285 533h1M289 533h1M297 533h1M301 533h1M305 533h1M309 533h1M317 533h1M321 533h1M326 533h1M330 533h1M338 533h1M342 533h1M346 533h1M260 534h1M264 534h1M268 534h1M277 534h1M281 534h1M285 534h1M289 534h1M297 534h1M301 534h1M305 534h1M309 534h1M317 534h1M321 534h1M326 534h1M330 534h1M338 534h1M264 535h1M268 535h1M277 535h1M281 535h1M285 535h1M289 535h1M297 535h1M301 535h1M305 535h1M309 535h1M317 535h1M321 535h1M326 535h1M330 535h1M277 536h1M281 536h1M285 536h1M289 536h1M297 536h1M301 536h1M305 536h1M309 536h1M317 536h1M321 536h1M326 536h1M281 537h1M285 537h1M289 537h1M297 537h1M301 537h1M305 537h1M309 537h1M317 537h1"/>
<path stroke="#ffffff" d="M285 61h1M305 61h1M285 62h1M305 62h1M325 62h1M264 63h1M285 63h1M305 63h1M325 63h1M264 64h1M285 64h1M305 64h1M325 64h1M264 65h1M285 65h1M305 65h1M325 65h1M346 65h1M264 66h1M285 66h1M305 66h1M325 66h1M346 66h1M244 67h1M265 67h1M285 67h1M305 67h1M325 67h1M346 67h1M244 68h1M265 68h1M286 68h1M304 68h1M325 68h1M345 68h1M244 69h1M265 69h1M286 69h1M304 69h1M324 69h1M345 69h1M245 70h1M265 70h1M286 70h1M304 70h1M324 70h1M345 70h1M366 70h1M245 71h1M265 71h1M286 71h1M304 71h1M324 71h1M345 71h1M366 71h1M245 72h1M265 72h1M286 72h1M304 72h1M324 72h1M344 72h1M365 72h1M224 73h1M245 73h1M265 73h1M286 73h1M304 73h1M324 73h1M344 73h1M365 73h1M224 74h1M246 74h1M266 74h1M286 74h1M304 74h1M324 74h1M344 74h1M365 74h1M225 75h1M246 75h1M266 75h1M286 75h1M324 75h1M344 75h1M364 75h1M225 76h1M246 76h1M266 76h1M324 76h1M344 76h1M364 76h1M225 77h1M246 77h1M266 77h1M343 77h1M364 77h1M386 77h1M226 78h1M247 78h1M343 78h1M364 78h1M386 78h1M226 79h1M247 79h1M343 79h1M363 79h1M385 79h1M204 80h1M226 80h1M247 80h1M363 80h1M385 80h1M204 81h1M226 81h1M363 81h1M384 81h1M205 82h1M227 82h1M362 82h1M384 82h1M205 83h1M227 83h1M362 83h1M384 83h1M206 84h1M227 84h1M383 84h1M206 85h1M228 85h1M383 85h1M207 86h1M228 86h1M383 86h1M405 86h1M207 87h1M382 87h1M404 87h1M208 88h1M382 88h1M404 88h1M208 89h1M381 89h1M403 89h1M185 90h1M209 90h1M381 90h1M403 90h1M186 91h1M209 91h1M402 91h1M186 92h1M210 92h1M402 92h1M187 93h1M210 93h1M401 93h1M187 94h1M401 94h1M188 95h1M400 95h1M189 96h1M400 96h1M423 96h1M189 97h1M399 97h1M422 97h1M190 98h1M399 98h1M422 98h1M190 99h1M421 99h1M168 100h1M191 100h1M420 100h1M169 101h1M191 101h1M420 101h1M169 102h1M192 102h1M419 102h1M170 103h1M419 103h1M170 104h1M418 104h1M171 105h1M417 105h1M172 106h1M417 106h1M172 107h1M416 107h1M441 107h1M173 108h1M440 108h1M173 109h1M439 109h1M174 110h1M439 110h1M174 111h1M438 111h1M175 112h1M437 112h1M151 113h1M436 113h1M152 114h1M435 114h1M153 115h1M434 115h1M153 116h1M434 116h1M154 117h1M433 117h1M155 118h1M432 118h1M156 119h1M157 120h1M457 120h1M157 121h1M456 121h1M158 122h1M455 122h1M159 123h1M455 123h1M454 124h1M453 125h1M135 126h1M452 126h1M136 127h1M451 127h1M137 128h1M450 128h1M138 129h1M450 129h1M139 130h1M449 130h1M140 131h1M448 131h1M140 132h1M141 133h1M142 134h1M143 135h1M472 135h1M144 136h1M471 136h1M470 137h1M469 138h1M467 139h2M466 140h1M120 141h1M465 141h1M121 142h1M464 142h1M122 143h2M463 143h1M124 144h1M462 144h1M125 145h1M126 146h1M127 147h1M128 148h2M130 149h1M131 150h1M485 151h1M484 152h1M482 153h2M481 154h1M480 155h1M479 156h1M107 157h1M477 157h2M108 158h1M476 158h1M109 159h2M475 159h1M111 160h1M112 161h1M113 162h1M114 163h1M115 164h2M117 165h1M118 166h1M498 168h1M496 169h2M494 170h2M492 171h2M491 172h1M489 173h2M487 174h2M96 175h1M486 175h1M97 176h2M99 177h1M100 178h2M102 179h2M104 180h1M105 181h2M107 182h1M508 185h1M506 186h2M504 187h2M502 188h2M501 189h1M499 190h2M497 191h2M496 192h1M86 193h1M87 194h2M89 195h2M91 196h2M93 197h2M95 198h2M97 199h2M517 204h2M515 205h2M513 206h2M511 207h2M509 208h2M507 209h2M505 210h2M77 212h2M79 213h2M81 214h3M84 215h3M87 216h2M89 217h2M524 224h2M521 225h3M517 226h4M514 227h3M512 228h2M70 232h2M72 233h3M75 234h4M79 235h3M82 236h2M529 244h3M525 245h4M521 246h4M518 247h3M65 252h3M68 253h4M72 254h5M77 255h3M532 264h4M525 265h7M521 266h4M62 273h7M69 274h8M530 285h8M523 286h7M61 293h7M68 294h7M524 304h7M531 305h7M68 312h8M61 313h7M522 324h7M529 325h8M74 332h4M67 333h7M63 334h4M519 343h3M522 344h4M526 345h5M531 346h3M78 351h3M74 352h4M70 353h4M67 354h3M515 362h2M517 363h3M520 364h4M524 365h3M527 366h2M85 370h2M82 371h3M78 372h4M75 373h3M73 374h2M508 381h2M510 382h2M512 383h3M515 384h3M518 385h2M520 386h2M92 388h2M90 389h2M88 390h2M86 391h2M84 392h2M82 393h2M80 394h2M500 399h1M501 400h2M503 401h2M505 402h2M507 403h2M509 404h2M511 405h2M102 406h1M100 407h2M98 408h2M96 409h2M95 410h1M93 411h2M91 412h2M90 413h1M491 416h1M492 417h2M494 418h1M495 419h2M497 420h2M499 421h1M500 422h2M112 423h1M502 423h1M110 424h2M108 425h2M106 426h2M105 427h1M103 428h2M101 429h2M100 430h1M480 432h1M481 433h1M482 434h2M484 435h1M485 436h1M486 437h1M487 438h1M123 439h1M488 439h2M122 440h1M490 440h1M120 441h2M491 441h1M119 442h1M118 443h1M117 444h1M115 445h2M114 446h1M113 447h1M467 448h1M468 449h1M469 450h2M471 451h1M472 452h1M473 453h1M136 454h1M474 454h1M135 455h1M475 455h2M134 456h1M477 456h1M133 457h1M478 457h1M131 458h2M130 459h1M129 460h1M128 461h1M127 462h1M454 462h1M126 463h1M455 463h1M456 464h1M457 465h1M458 466h1M150 467h1M459 467h1M149 468h1M459 468h1M148 469h1M460 469h1M148 470h1M461 470h1M147 471h1M462 471h1M146 472h1M463 472h1M145 473h1M144 474h1M143 475h1M439 475h1M143 476h1M440 476h1M142 477h1M441 477h1M141 478h1M441 478h1M442 479h1M166 480h1M443 480h1M165 481h1M444 481h1M164 482h1M445 482h1M164 483h1M445 483h1M163 484h1M446 484h1M162 485h1M447 485h1M161 486h1M423 486h1M160 487h1M424 487h1M159 488h1M424 488h1M159 489h1M425 489h1M158 490h1M425 490h1M157 491h1M182 491h1M426 491h1M181 492h1M427 492h1M181 493h1M427 493h1M180 494h1M428 494h1M179 495h1M428 495h1M179 496h1M406 496h1M429 496h1M178 497h1M407 497h1M429 497h1M178 498h1M407 498h1M430 498h1M177 499h1M408 499h1M176 500h1M199 500h1M408 500h1M176 501h1M198 501h1M409 501h1M175 502h1M198 502h1M410 502h1M197 503h1M410 503h1M197 504h1M411 504h1M196 505h1M388 505h1M411 505h1M196 506h1M388 506h1M412 506h1M195 507h1M389 507h1M412 507h1M195 508h1M217 508h1M389 508h1M413 508h1M194 509h1M217 509h1M390 509h1M194 510h1M216 510h1M390 510h1M193 511h1M216 511h1M391 511h1M193 512h1M215 512h1M370 512h1M391 512h1M215 513h1M370 513h1M392 513h1M215 514h1M371 514h1M392 514h1M214 515h1M236 515h1M371 515h1M393 515h1M214 516h1M236 516h1M371 516h1M393 516h1M214 517h1M235 517h1M372 517h1M394 517h1M213 518h1M235 518h1M351 518h1M372 518h1M394 518h1M213 519h1M235 519h1M255 519h1M351 519h1M372 519h1M212 520h1M234 520h1M255 520h1M351 520h1M372 520h1M212 521h1M234 521h1M255 521h1M332 521h1M352 521h1M373 521h1M234 522h1M254 522h1M274 522h1M332 522h1M352 522h1M373 522h1M234 523h1M254 523h1M274 523h1M312 523h1M332 523h1M352 523h1M373 523h1M233 524h1M254 524h1M274 524h1M294 524h1M312 524h1M332 524h1M352 524h1M374 524h1M233 525h1M254 525h1M274 525h1M294 525h1M312 525h1M333 525h1M353 525h1M374 525h1M233 526h1M253 526h1M274 526h1M294 526h1M312 526h1M333 526h1M353 526h1M232 527h1M253 527h1M274 527h1M294 527h1M312 527h1M333 527h1M353 527h1M232 528h1M253 528h1M274 528h1M294 528h1M312 528h1M333 528h1M353 528h1M253 529h1M273 529h1M294 529h1M312 529h1M333 529h1M354 529h1M253 530h1M273 530h1M294 530h1M313 530h1M333 530h1M354 530h1M252 531h1M273 531h1M293 531h1M313 531h1M333 531h1M354 531h1M252 532h1M273 532h1M293 532h1M313 532h1M334 532h1M252 533h1M273 533h1M293 533h1M313 533h1M334 533h1M273 534h1M293 534h1M313 534h1M334 534h1M273 535h1M293 535h1M313 535h1M334 535h1M273 536h1M293 536h1M313 536h1M293 537h1M313 537h1"/>
<path stroke="#7f7f7f" d="M235 117h1M236 119h1M237 121h1M237 123h1M238 125h1M239 127h1M240 129h1M240 131h1M241 133h1M242 135h1M242 137h1M243 139h1M244 141h1M244 143h1M245 145h1M246 147h1M247 149h1M247 151h1M248 153h1M426 153h1M249 155h1M424 155h1M249 157h1M423 157h1M250 159h1M421 159h1M251 161h1M419 161h1M251 163h1M417 163h1M252 165h1M416 165h1M253 167h1M414 167h1M254 169h1M412 169h1M254 171h1M410 171h1M255 173h1M409 173h1M256 175h1M407 175h1M256 177h1M405 177h1M257 179h1M403 179h1M258 181h1M402 181h1M258 183h1M400 183h1M259 185h1M398 185h1M260 187h1M396 187h1M261 189h1M395 189h1M139 190h1M141 191h1M261 191h1M393 191h1M143 193h1M262 193h1M391 193h1M145 194h1M147 195h1M263 195h1M389 195h1M149 197h1M263 197h1M388 197h1M151 198h1M264 199h1M386 199h1M153 200h1M155 201h1M265 201h1M384 201h1M157 202h1M265 203h1M383 203h1M159 204h1M161 205h1M266 205h1M381 205h1M163 206h1M267 207h1M379 207h1M165 208h1M167 209h1M268 209h1M377 209h1M169 210h1M268 211h1M376 211h1M171 212h1M173 213h1M269 213h1M374 213h1M175 215h1M270 215h1M372 215h1M177 216h1M179 217h1M270 217h1M370 217h1M181 219h1M271 219h1M369 219h1M475 219h1M183 220h1M473 220h1M185 221h1M272 221h1M367 221h1M471 221h1M469 222h1M187 223h1M272 223h1M365 223h1M467 223h1M189 224h1M463 224h1M465 224h1M191 225h1M273 225h1M363 225h1M461 225h1M459 226h1M193 227h1M274 227h1M362 227h1M457 227h1M195 228h1M455 228h1M275 229h1M360 229h1M453 229h1M197 230h1M451 230h1M199 231h1M275 231h1M358 231h1M449 231h1M201 232h1M447 232h1M276 233h1M356 233h1M445 233h1M203 234h1M441 234h1M443 234h1M205 235h1M277 235h1M355 235h1M439 235h1M207 236h1M437 236h1M277 237h1M353 237h1M435 237h1M209 238h1M433 238h1M211 239h1M278 239h1M351 239h1M431 239h1M213 240h1M429 240h1M279 241h1M349 241h1M427 241h1M215 242h1M425 242h1M217 243h1M279 243h1M348 243h1M423 243h1M419 244h1M421 244h1M219 245h1M280 245h1M346 245h1M417 245h1M221 246h1M415 246h1M223 247h1M281 247h1M344 247h1M413 247h1M411 248h1M225 249h1M282 249h1M342 249h1M409 249h1M227 250h1M407 250h1M229 251h1M282 251h1M341 251h1M405 251h1M403 252h1M231 253h1M283 253h1M339 253h1M401 253h1M233 254h1M397 254h1M399 254h1M235 255h1M284 255h1M337 255h1M395 255h1M393 256h1M237 257h1M284 257h1M336 257h1M391 257h1M239 258h1M389 258h1M241 259h1M285 259h1M334 259h1M387 259h1M385 260h1M243 261h1M286 261h1M332 261h1M383 261h1M245 262h1M381 262h1M286 263h1M330 263h1M379 263h1M247 264h1M375 264h1M377 264h1M249 265h1M287 265h1M329 265h1M373 265h1M251 266h1M371 266h1M288 267h1M327 267h1M369 267h1M253 268h1M367 268h1M255 269h1M289 269h1M325 269h1M365 269h1M257 270h1M363 270h1M289 271h1M323 271h1M361 271h1M259 272h1M359 272h1M261 273h1M290 273h1M322 273h1M357 273h1M263 274h1M353 274h1M355 274h1M291 275h1M320 275h1M351 275h1M265 276h1M349 276h1M267 277h1M291 277h1M318 277h1M347 277h1M345 278h1M269 279h1M292 279h1M316 279h1M343 279h1M271 280h1M341 280h1M273 281h1M293 281h1M315 281h1M339 281h1M337 282h1M275 283h1M293 283h1M313 283h1M335 283h1M277 284h1M331 284h1M333 284h1M279 285h1M294 285h1M311 285h1M329 285h1M327 286h1M281 287h1M295 287h1M309 287h1M325 287h1M283 288h1M323 288h1M285 289h1M296 289h1M308 289h1M321 289h1M319 290h1M287 291h1M296 291h1M306 291h1M317 291h1M289 292h1M315 292h1M297 293h1M304 293h1M313 293h1M291 294h1M309 294h1M311 294h1M293 295h1M298 295h1M302 295h1M307 295h1M295 296h1M305 296h1M298 297h1M301 297h1M303 297h1M297 298h1M301 298h1M299 299h1M297 300h1M301 300h1M295 301h1M297 301h1M300 301h1M293 302h1M303 302h1M291 303h1M296 303h1M300 303h1M305 303h1M287 304h1M289 304h1M307 304h1M285 305h1M294 305h1M301 305h1M283 306h1M309 306h1M281 307h1M292 307h1M302 307h1M311 307h1M279 308h1M277 309h1M290 309h1M302 309h1M313 309h1M275 310h1M315 310h1M273 311h1M289 311h1M303 311h1M317 311h1M271 312h1M269 313h1M287 313h1M304 313h1M319 313h1M265 314h1M267 314h1M321 314h1M263 315h1M285 315h1M305 315h1M323 315h1M261 316h1M259 317h1M283 317h1M305 317h1M325 317h1M257 318h1M327 318h1M255 319h1M282 319h1M306 319h1M329 319h1M253 320h1M251 321h1M280 321h1M307 321h1M331 321h1M249 322h1M333 322h1M247 323h1M278 323h1M307 323h1M243 324h1M245 324h1M335 324h1M241 325h1M276 325h1M308 325h1M337 325h1M239 326h1M339 326h1M237 327h1M275 327h1M309 327h1M235 328h1M341 328h1M233 329h1M273 329h1M309 329h1M343 329h1M231 330h1M345 330h1M229 331h1M271 331h1M310 331h1M227 332h1M347 332h1M225 333h1M269 333h1M311 333h1M349 333h1M221 334h1M223 334h1M351 334h1M219 335h1M268 335h1M312 335h1M217 336h1M353 336h1M215 337h1M266 337h1M312 337h1M355 337h1M213 338h1M211 339h1M264 339h1M313 339h1M357 339h1M209 340h1M359 340h1M207 341h1M262 341h1M314 341h1M361 341h1M205 342h1M203 343h1M261 343h1M314 343h1M363 343h1M199 344h1M201 344h1M365 344h1M197 345h1M259 345h1M315 345h1M367 345h1M195 346h1M193 347h1M257 347h1M316 347h1M369 347h1M191 348h1M371 348h1M189 349h1M256 349h1M316 349h1M373 349h1M187 350h1M185 351h1M254 351h1M317 351h1M375 351h1M183 352h1M377 352h1M181 353h1M252 353h1M318 353h1M177 354h1M179 354h1M379 354h1M175 355h1M250 355h1M319 355h1M381 355h1M173 356h1M383 356h1M171 357h1M249 357h1M319 357h1M169 358h1M385 358h1M167 359h1M247 359h1M320 359h1M387 359h1M165 360h1M389 360h1M163 361h1M245 361h1M321 361h1M161 362h1M391 362h1M159 363h1M243 363h1M321 363h1M393 363h1M155 364h1M157 364h1M395 364h1M153 365h1M242 365h1M322 365h1M151 366h1M397 366h1M149 367h1M240 367h1M323 367h1M399 367h1M147 368h1M401 368h1M145 369h1M238 369h1M323 369h1M143 370h1M403 370h1M141 371h1M236 371h1M324 371h1M405 371h1M139 372h1M137 373h1M235 373h1M325 373h1M407 373h1M133 374h1M135 374h1M409 374h1M131 375h1M233 375h1M326 375h1M411 375h1M129 376h1M127 377h1M231 377h1M326 377h1M413 377h1M125 378h1M415 378h1M123 379h1M229 379h1M327 379h1M417 379h1M228 381h1M328 381h1M419 381h1M421 382h1M226 383h1M328 383h1M423 383h1M224 385h1M329 385h1M425 385h1M427 386h1M222 387h1M330 387h1M429 388h1M221 389h1M330 389h1M431 389h1M433 390h1M219 391h1M331 391h1M435 392h1M217 393h1M332 393h1M437 393h1M439 394h1M215 395h1M333 395h1M441 396h1M214 397h1M333 397h1M443 397h1M445 398h1M212 399h1M334 399h1M447 400h1M210 401h1M335 401h1M449 401h1M209 403h1M335 403h1M451 403h1M453 404h1M207 405h1M336 405h1M455 405h1M205 407h1M337 407h1M457 407h1M459 408h1M203 409h1M337 409h1M202 411h1M338 411h1M200 413h1M339 413h1M198 415h1M340 415h1M196 417h1M340 417h1M195 419h1M341 419h1M193 421h1M342 421h1M191 423h1M342 423h1M189 425h1M343 425h1M188 427h1M344 427h1M186 429h1M344 429h1M184 431h1M345 431h1M182 433h1M346 433h1M181 435h1M347 435h1M179 437h1M347 437h1M177 439h1M348 439h1M175 441h1M349 441h1M174 443h1M349 443h1M172 445h1M350 445h1M351 447h1M351 449h1M352 451h1M353 453h1M354 455h1M354 457h1M355 459h1M356 461h1M356 463h1M357 465h1M358 467h1M358 469h1M359 471h1M360 473h1M361 475h1M361 477h1M362 479h1M363 481h1"/>
<path stroke="#ffffff" d="M233 24h1M233 25h1M233 26h1M234 27h1M379 27h1M234 28h1M379 28h1M234 29h1M378 29h1M234 30h1M378 30h1M235 31h1M378 31h1M235 32h1M378 32h1M235 33h1M377 33h1M235 34h1M377 34h1M236 35h1M377 35h1M236 36h1M376 36h1M236 37h1M376 37h1M236 38h1M376 38h1M237 39h1M376 39h1M237 40h1M375 40h1M237 41h1M375 41h1M237 42h1M375 42h1M238 43h1M374 43h1M238 44h1M374 44h1M238 45h1M374 45h1M238 46h1M374 46h1M238 47h1M373 47h1M239 48h1M373 48h1M239 49h1M373 49h1M239 50h1M372 50h1M239 51h1M372 51h1M240 52h1M372 52h1M240 53h1M372 53h1M240 54h1M371 54h1M240 55h1M371 55h1M241 56h1M371 56h1M241 57h1M370 57h1M241 58h1M370 58h1M241 59h1M370 59h1M242 60h1M370 60h1M242 61h1M369 61h1M242 62h1M369 62h1M242 63h1M369 63h1M243 64h1M368 64h1M243 65h1M368 65h1M243 66h1M368 66h1M368 67h1M367 68h1M367 69h1M350 82h1M350 83h1M350 84h1M349 85h1M349 86h1M349 87h1M225 88h1M349 88h1M225 89h1M348 89h1M226 90h1M348 90h1M226 91h1M348 91h1M226 92h1M348 92h1M227 93h1M348 93h1M104 94h1M227 94h1M347 94h1M105 95h1M228 95h1M347 95h1M106 96h1M228 96h1M347 96h1M107 97h1M228 97h1M347 97h1M108 98h1M229 98h1M347 98h1M109 99h1M229 99h1M346 99h1M110 100h1M229 100h1M346 100h1M111 101h1M230 101h1M346 101h1M112 102h1M230 102h1M346 102h1M113 103h1M231 103h1M345 103h1M114 104h1M231 104h1M345 104h1M504 104h1M115 105h1M231 105h1M345 105h1M503 105h1M116 106h1M232 106h1M345 106h1M502 106h1M117 107h1M232 107h1M345 107h1M501 107h1M118 108h1M232 108h1M344 108h1M500 108h1M119 109h1M233 109h1M344 109h1M499 109h1M119 110h1M233 110h1M344 110h1M498 110h1M120 111h1M234 111h1M497 111h1M121 112h1M234 112h1M496 112h1M122 113h1M234 113h1M495 113h1M123 114h1M235 114h1M494 114h1M124 115h1M235 115h1M493 115h1M125 116h1M492 116h1M126 117h1M491 117h1M127 118h1M490 118h1M128 119h1M488 119h2M129 120h1M487 120h1M130 121h1M486 121h1M131 122h1M485 122h1M132 123h1M484 123h1M133 124h1M483 124h1M134 125h1M482 125h1M481 126h1M480 127h1M479 128h1M478 129h1M445 130h1M477 130h1M444 131h1M476 131h1M443 132h1M475 132h1M443 133h1M474 133h1M442 134h1M473 134h1M441 135h1M440 136h1M439 137h1M438 138h1M438 139h1M437 140h1M436 141h1M435 142h1M434 143h1M434 144h1M433 145h1M432 146h1M431 147h1M430 148h1M429 149h1M429 150h1M428 151h1M427 152h1M115 173h1M116 174h2M118 175h1M119 176h2M121 177h1M122 178h2M124 179h1M125 180h2M127 181h1M128 182h2M130 183h1M131 184h2M133 185h1M134 186h2M136 187h1M137 188h2M139 189h1M501 206h2M499 207h2M497 208h2M495 209h2M493 210h2M491 211h2M488 212h3M486 213h2M484 214h2M482 215h2M480 216h2M478 217h2M476 218h2M27 219h2M29 220h4M33 221h3M36 222h4M40 223h3M43 224h4M47 225h3M50 226h4M54 227h3M57 228h4M61 229h3M64 230h4M68 231h2M572 233h3M568 234h4M564 235h4M560 236h4M556 237h4M551 238h5M547 239h4M543 240h4M539 241h4M535 242h4M532 243h3M75 299h30M494 299h30M64 355h3M60 356h4M56 357h4M52 358h4M48 359h4M43 360h5M39 361h4M35 362h4M31 363h4M27 364h4M24 365h3M529 367h2M531 368h4M535 369h3M538 370h4M542 371h3M545 372h4M549 373h3M552 374h4M556 375h3M559 376h4M563 377h3M566 378h4M570 379h2M121 380h2M119 381h2M117 382h2M115 383h2M113 384h2M111 385h2M108 386h3M106 387h2M104 388h2M102 389h2M100 390h2M98 391h2M96 392h2M459 409h1M460 410h2M462 411h1M463 412h2M465 413h1M466 414h2M468 415h1M469 416h2M471 417h1M472 418h2M474 419h1M475 420h2M477 421h1M478 422h2M480 423h1M481 424h2M483 425h1M171 446h1M170 447h1M169 448h1M169 449h1M168 450h1M167 451h1M166 452h1M165 453h1M164 454h1M164 455h1M163 456h1M162 457h1M161 458h1M160 459h1M160 460h1M159 461h1M158 462h1M157 463h1M125 464h1M156 464h1M124 465h1M155 465h1M123 466h1M155 466h1M122 467h1M154 467h1M121 468h1M153 468h1M120 469h1M119 470h1M118 471h1M117 472h1M116 473h1M464 473h1M115 474h1M465 474h1M114 475h1M466 475h1M113 476h1M467 476h1M112 477h1M468 477h1M111 478h1M469 478h1M109 479h2M470 479h1M108 480h1M471 480h1M107 481h1M472 481h1M106 482h1M473 482h1M105 483h1M363 483h1M474 483h1M104 484h1M363 484h1M475 484h1M103 485h1M364 485h1M476 485h1M102 486h1M364 486h1M477 486h1M101 487h1M364 487h1M478 487h1M100 488h1M254 488h1M365 488h1M479 488h1M99 489h1M254 489h1M365 489h1M479 489h1M98 490h1M254 490h1M366 490h1M480 490h1M97 491h1M253 491h1M366 491h1M481 491h1M96 492h1M253 492h1M366 492h1M482 492h1M95 493h1M253 493h1M367 493h1M483 493h1M94 494h1M253 494h1M367 494h1M484 494h1M252 495h1M367 495h1M485 495h1M252 496h1M368 496h1M486 496h1M252 497h1M368 497h1M487 497h1M252 498h1M369 498h1M488 498h1M252 499h1M369 499h1M489 499h1M251 500h1M369 500h1M490 500h1M251 501h1M370 501h1M491 501h1M251 502h1M370 502h1M492 502h1M251 503h1M370 503h1M493 503h1M251 504h1M371 504h1M494 504h1M250 505h1M371 505h1M250 506h1M372 506h1M250 507h1M372 507h1M250 508h1M372 508h1M249 509h1M373 509h1M249 510h1M373 510h1M249 511h1M249 512h1M249 513h1M248 514h1M248 515h1M248 516h1M231 529h1M231 530h1M230 531h1M230 532h1M355 532h1M230 533h1M355 533h1M230 534h1M355 534h1M229 535h1M356 535h1M229 536h1M356 536h1M229 537h1M356 537h1M228 538h1M356 538h1M228 539h1M357 539h1M228 540h1M357 540h1M228 541h1M357 541h1M227 542h1M357 542h1M227 543h1M358 543h1M227 544h1M358 544h1M226 545h1M358 545h1M226 546h1M358 546h1M226 547h1M359 547h1M226 548h1M359 548h1M225 549h1M359 549h1M225 550h1M359 550h1M225 551h1M360 551h1M224 552h1M360 552h1M224 553h1M360 553h1M224 554h1M360 554h1M224 555h1M360 555h1M223 556h1M361 556h1M223 557h1M361 557h1M223 558h1M361 558h1M222 559h1M361 559h1M222 560h1M362 560h1M222 561h1M362 561h1M222 562h1M362 562h1M221 563h1M362 563h1M221 564h1M363 564h1M221 565h1M363 565h1M220 566h1M363 566h1M220 567h1M363 567h1M220 568h1M364 568h1M220 569h1M364 569h1M219 570h1M364 570h1M219 571h1M364 571h1M365 572h1M365 573h1M365 574h1"/>
<path stroke="#ffffff" d="M285 15h28M275 16h10M313 16h10M265 17h10M323 17h10M255 18h10M333 18h10M248 19h7M343 19h8M243 20h5M351 20h5M238 21h5M356 21h5M234 22h4M361 22h4M230 23h4M365 23h4M226 24h4M369 24h3M223 25h3M372 25h4M220 26h3M376 26h3M217 27h3M379 27h3M214 28h3M382 28h3M211 29h3M385 29h3M207 30h4M388 30h3M204 31h3M391 31h4M201 32h3M395 32h3M199 33h2M398 33h2M197 34h2M400 34h2M195 35h2M402 35h2M192 36h3M404 36h3M190 37h2M407 37h2M188 38h2M409 38h2M186 39h2M411 39h2M183 40h3M413 40h3M181 41h2M416 41h2M179 42h2M418 42h2M177 43h2M420 43h2M174 44h3M422 44h3M172 45h2M425 45h2M170 46h2M427 46h2M168 47h2M429 47h2M166 48h2M431 48h2M164 49h2M433 49h2M162 50h2M435 50h2M160 51h2M437 51h2M158 52h2M439 52h2M157 53h1M441 53h1M155 54h2M442 54h2M153 55h2M444 55h1M152 56h1M445 56h2M150 57h2M447 57h2M149 58h1M449 58h1M147 59h2M450 59h2M146 60h1M287 60h24M452 60h1M144 61h2M270 61h17M311 61h17M453 61h2M143 62h1M264 62h6M328 62h6M455 62h1M141 63h2M260 63h4M334 63h4M456 63h2M140 64h1M254 64h6M338 64h6M458 64h1M138 65h2M248 65h6M344 65h6M459 65h2M136 66h2M244 66h4M350 66h4M461 66h1M135 67h1M240 67h4M354 67h5M462 67h2M133 68h2M236 68h4M359 68h4M464 68h2M132 69h1M232 69h4M363 69h4M466 69h1M130 70h2M229 70h3M367 70h2M467 70h1M129 71h1M227 71h2M369 71h3M468 71h2M128 72h1M224 72h3M372 72h3M470 72h1M126 73h2M220 73h4M375 73h4M471 73h1M125 74h1M217 74h3M379 74h3M472 74h2M124 75h1M214 75h3M288 75h22M382 75h2M474 75h1M123 76h1M212 76h2M272 76h16M310 76h16M384 76h3M475 76h1M122 77h1M209 77h3M265 77h7M326 77h8M387 77h2M476 77h1M121 78h1M207 78h2M259 78h6M334 78h5M389 78h2M477 78h1M120 79h1M205 79h2M255 79h4M339 79h4M391 79h2M478 79h1M119 80h1M203 80h2M251 80h4M343 80h4M393 80h2M479 80h1M118 81h1M201 81h2M247 81h4M347 81h4M395 81h3M480 81h1M117 82h1M199 82h2M244 82h3M351 82h4M398 82h2M481 82h1M115 83h2M197 83h2M240 83h4M355 83h4M400 83h2M482 83h1M114 84h1M194 84h3M236 84h4M359 84h3M402 84h2M483 84h2M113 85h1M192 85h2M232 85h4M362 85h4M404 85h2M485 85h1M111 86h2M190 86h2M229 86h3M366 86h4M406 86h2M486 86h1M110 87h1M188 87h2M227 87h2M370 87h2M408 87h2M487 87h2M109 88h1M187 88h1M225 88h2M372 88h2M410 88h2M489 88h1M108 89h1M185 89h2M221 89h4M374 89h3M412 89h2M490 89h1M107 90h1M183 90h2M217 90h4M377 90h4M414 90h2M491 90h1M106 91h1M181 91h2M214 91h3M381 91h4M416 91h2M492 91h1M105 92h1M180 92h1M212 92h2M385 92h2M418 92h1M493 92h1M104 93h1M178 93h2M210 93h2M387 93h2M419 93h2M494 93h1M103 94h1M176 94h2M208 94h2M389 94h2M421 94h2M495 94h1M102 95h1M174 95h2M206 95h2M391 95h2M423 95h2M496 95h1M101 96h1M173 96h1M204 96h2M393 96h2M425 96h1M497 96h1M100 97h1M171 97h2M202 97h2M395 97h2M426 97h2M498 97h1M99 98h1M170 98h1M200 98h2M397 98h2M428 98h1M499 98h1M98 99h1M169 99h1M198 99h2M399 99h2M429 99h1M500 99h1M97 100h1M167 100h2M196 100h2M401 100h2M430 100h2M501 100h1M96 101h1M166 101h1M194 101h2M403 101h2M432 101h1M502 101h1M95 102h1M164 102h2M192 102h2M405 102h2M433 102h2M503 102h1M94 103h1M163 103h1M190 103h2M407 103h2M435 103h1M504 103h1M93 104h1M162 104h1M188 104h2M409 104h2M436 104h1M505 104h1M92 105h1M160 105h2M187 105h1M283 105h33M411 105h1M437 105h2M506 105h1M91 106h1M159 106h1M185 106h2M276 106h7M316 106h7M412 106h2M439 106h1M507 106h1M90 107h1M157 107h2M184 107h1M269 107h7M323 107h6M414 107h1M440 107h2M508 107h1M89 108h1M156 108h1M182 108h2M263 108h6M329 108h7M415 108h2M442 108h1M509 108h1M88 109h1M155 109h1M181 109h1M258 109h5M336 109h5M417 109h1M443 109h1M510 109h1M87 110h1M153 110h2M179 110h2M254 110h4M341 110h4M418 110h2M444 110h2M511 110h1M86 111h1M152 111h1M177 111h2M251 111h3M345 111h3M420 111h2M446 111h1M512 111h1M86 112h1M151 112h1M175 112h2M248 112h3M348 112h3M422 112h2M447 112h1M512 112h1M85 113h1M149 113h2M174 113h1M245 113h3M351 113h3M424 113h1M448 113h1M513 113h1M84 114h1M148 114h1M173 114h1M241 114h4M354 114h4M425 114h1M449 114h2M514 114h1M83 115h1M147 115h1M171 115h2M238 115h3M358 115h3M426 115h1M451 115h1M515 115h1M83 116h1M146 116h1M170 116h1M235 116h3M361 116h3M427 116h2M452 116h1M515 116h1M82 117h1M145 117h1M169 117h1M232 117h3M364 117h3M429 117h1M453 117h1M516 117h1M81 118h1M144 118h1M168 118h1M229 118h3M367 118h3M430 118h1M454 118h1M517 118h1M80 119h1M142 119h2M166 119h2M226 119h3M370 119h3M431 119h2M455 119h2M518 119h1M79 120h1M141 120h1M165 120h1M224 120h2M373 120h2M433 120h1M457 120h1M519 120h1M78 121h1M140 121h1M164 121h1M222 121h2M375 121h2M434 121h1M458 121h1M520 121h1M77 122h1M139 122h1M162 122h2M219 122h3M377 122h2M435 122h2M459 122h1M521 122h1M76 123h1M138 123h1M161 123h1M217 123h2M379 123h2M437 123h1M460 123h1M522 123h1M75 124h1M136 124h2M160 124h1M215 124h2M381 124h2M438 124h1M461 124h1M523 124h1M74 125h1M135 125h1M158 125h2M213 125h2M383 125h2M439 125h1M462 125h2M524 125h1M73 126h1M134 126h1M157 126h1M211 126h2M385 126h2M440 126h2M464 126h1M525 126h1M73 127h1M133 127h1M156 127h1M209 127h2M387 127h2M442 127h1M465 127h1M525 127h1M72 128h1M132 128h1M155 128h1M207 128h2M389 128h2M443 128h1M466 128h1M526 128h1M71 129h1M131 129h1M154 129h1M205 129h2M391 129h2M444 129h1M467 129h1M527 129h1M70 130h1M130 130h1M152 130h2M203 130h2M393 130h2M445 130h1M468 130h1M528 130h1M70 131h1M129 131h1M151 131h1M202 131h1M395 131h2M446 131h2M469 131h1M528 131h1M69 132h1M128 132h1M150 132h1M200 132h2M397 132h2M448 132h1M470 132h1M529 132h1M68 133h1M127 133h1M149 133h1M199 133h1M399 133h1M449 133h1M471 133h1M530 133h1M68 134h1M126 134h1M148 134h1M197 134h2M400 134h2M450 134h1M472 134h1M530 134h1M67 135h1M125 135h1M147 135h1M196 135h1M402 135h1M451 135h1M473 135h1M531 135h1M66 136h1M124 136h1M146 136h1M194 136h2M403 136h2M452 136h1M474 136h1M532 136h1M66 137h1M124 137h1M145 137h1M192 137h2M405 137h2M453 137h1M474 137h1M532 137h1M65 138h1M123 138h1M144 138h1M191 138h1M407 138h1M454 138h1M475 138h1M533 138h1M65 139h1M122 139h1M143 139h1M189 139h2M408 139h2M455 139h1M476 139h1M533 139h1M64 140h1M121 140h1M142 140h1M188 140h1M410 140h1M456 140h1M477 140h1M534 140h1M63 141h1M120 141h1M141 141h1M186 141h2M411 141h2M457 141h1M478 141h1M535 141h1M63 142h1M119 142h1M140 142h1M185 142h1M413 142h1M458 142h1M479 142h1M535 142h1M62 143h1M119 143h1M139 143h1M184 143h1M414 143h1M459 143h1M479 143h1M536 143h1M61 144h1M118 144h1M138 144h1M182 144h2M415 144h2M460 144h1M480 144h1M537 144h1M61 145h1M117 145h1M137 145h1M181 145h1M417 145h1M461 145h1M481 145h1M537 145h1M60 146h1M116 146h1M136 146h1M180 146h1M418 146h1M462 146h1M482 146h1M538 146h1M59 147h1M115 147h1M135 147h1M179 147h1M419 147h1M463 147h1M483 147h1M539 147h1M59 148h1M114 148h1M134 148h1M177 148h2M420 148h1M464 148h1M484 148h1M539 148h1M58 149h1M113 149h1M133 149h1M176 149h1M421 149h2M465 149h1M485 149h1M540 149h1M57 150h1M113 150h1M132 150h1M175 150h1M423 150h1M466 150h1M485 150h1M541 150h1M57 151h1M112 151h1M131 151h1M174 151h1M424 151h1M467 151h1M486 151h1M541 151h1M56 152h1M111 152h1M130 152h1M173 152h1M425 152h1M468 152h1M487 152h1M542 152h1M55 153h1M110 153h1M130 153h1M171 153h2M426 153h2M468 153h1M488 153h1M543 153h1M55 154h1M110 154h1M129 154h1M170 154h1M428 154h1M469 154h1M488 154h1M543 154h1M54 155h1M109 155h1M128 155h1M169 155h1M429 155h1M470 155h1M489 155h1M544 155h1M54 156h1M108 156h1M127 156h1M168 156h1M430 156h1M471 156h1M490 156h1M544 156h1M53 157h1M107 157h1M126 157h1M167 157h1M431 157h1M472 157h1M491 157h1M545 157h1M52 158h1M107 158h1M125 158h1M166 158h1M432 158h1M473 158h1M491 158h1M546 158h1M52 159h1M106 159h1M125 159h1M165 159h1M433 159h1M473 159h1M492 159h1M546 159h1M51 160h1M105 160h1M124 160h1M164 160h1M434 160h1M474 160h1M493 160h1M547 160h1M51 161h1M105 161h1M123 161h1M163 161h1M435 161h1M475 161h1M493 161h1M547 161h1M50 162h1M104 162h1M122 162h1M162 162h1M436 162h1M476 162h1M494 162h1M548 162h1M50 163h1M103 163h1M122 163h1M161 163h1M437 163h1M476 163h1M495 163h1M548 163h1M49 164h1M102 164h1M121 164h1M160 164h1M438 164h1M477 164h1M496 164h1M549 164h1M49 165h1M102 165h1M120 165h1M159 165h1M439 165h1M478 165h1M496 165h1M549 165h1M48 166h1M101 166h1M119 166h1M158 166h1M440 166h1M479 166h1M497 166h1M550 166h1M48 167h1M100 167h1M119 167h1M157 167h1M441 167h1M479 167h1M498 167h1M550 167h1M47 168h1M100 168h1M118 168h1M156 168h1M442 168h1M480 168h1M498 168h1M551 168h1M47 169h1M99 169h1M117 169h1M155 169h1M443 169h1M481 169h1M499 169h1M551 169h1M46 170h1M98 170h1M116 170h1M154 170h1M444 170h1M482 170h1M500 170h1M552 170h1M46 171h1M97 171h1M115 171h1M153 171h1M445 171h1M483 171h1M501 171h1M552 171h1M45 172h1M97 172h1M115 172h1M153 172h1M445 172h1M483 172h1M501 172h1M553 172h1M45 173h1M96 173h1M114 173h1M152 173h1M446 173h1M484 173h1M502 173h1M553 173h1M44 174h1M95 174h1M113 174h1M151 174h1M447 174h1M485 174h1M503 174h1M554 174h1M44 175h1M95 175h1M112 175h1M150 175h1M448 175h1M486 175h1M503 175h1M554 175h1M44 176h1M94 176h1M112 176h1M149 176h1M449 176h1M486 176h1M504 176h1M554 176h1M43 177h1M94 177h1M111 177h1M148 177h1M450 177h1M487 177h1M504 177h1M555 177h1M43 178h1M93 178h1M111 178h1M148 178h1M450 178h1M487 178h1M505 178h1M555 178h1M42 179h1M93 179h1M110 179h1M147 179h1M451 179h1M488 179h1M505 179h1M556 179h1M42 180h1M92 180h1M110 180h1M146 180h1M452 180h1M488 180h1M506 180h1M556 180h1M41 181h1M91 181h1M109 181h1M145 181h1M453 181h1M489 181h1M507 181h1M557 181h1M41 182h1M91 182h1M108 182h1M144 182h1M454 182h1M490 182h1M507 182h1M557 182h1M40 183h1M90 183h1M108 183h1M144 183h1M454 183h1M490 183h1M508 183h1M558 183h1M40 184h1M90 184h1M107 184h1M143 184h1M455 184h1M491 184h1M508 184h1M558 184h1M40 185h1M89 185h1M106 185h1M142 185h1M456 185h1M492 185h1M509 185h1M558 185h1M39 186h1M89 186h1M106 186h1M141 186h1M457 186h1M492 186h1M509 186h1M559 186h1M39 187h1M88 187h1M105 187h1M141 187h1M457 187h1M493 187h1M510 187h1M559 187h1M38 188h1M87 188h1M104 188h1M140 188h1M458 188h1M494 188h1M511 188h1M560 188h1M38 189h1M87 189h1M104 189h1M139 189h1M459 189h1M494 189h1M511 189h1M560 189h1M37 190h1M86 190h1M103 190h1M139 190h1M459 190h1M495 190h1M512 190h1M561 190h1M37 191h1M86 191h1M103 191h1M138 191h1M460 191h1M495 191h1M512 191h1M561 191h1M36 192h1M85 192h1M102 192h1M137 192h1M461 192h1M496 192h1M513 192h1M562 192h1M36 193h1M85 193h1M102 193h1M137 193h1M461 193h1M496 193h1M513 193h1M562 193h1M36 194h1M84 194h1M101 194h1M136 194h1M462 194h1M497 194h1M514 194h1M562 194h1M35 195h1M84 195h1M101 195h1M136 195h1M462 195h1M497 195h1M514 195h1M563 195h1M35 196h1M84 196h1M100 196h1M135 196h1M463 196h1M498 196h1M514 196h1M563 196h1M34 197h1M83 197h1M100 197h1M134 197h1M464 197h1M498 197h1M515 197h1M564 197h1M34 198h1M83 198h1M99 198h1M134 198h1M464 198h1M499 198h1M515 198h1M564 198h1M33 199h1M82 199h1M99 199h1M133 199h1M465 199h1M499 199h1M516 199h1M565 199h1M33 200h1M82 200h1M98 200h1M132 200h1M466 200h1M500 200h1M516 200h1M565 200h1M32 201h1M81 201h1M98 201h1M132 201h1M466 201h1M500 201h1M517 201h1M566 201h1M32 202h1M81 202h1M97 202h1M131 202h1M467 202h1M501 202h1M517 202h1M566 202h1M32 203h1M80 203h1M97 203h1M130 203h1M468 203h1M501 203h1M518 203h1M566 203h1M31 204h1M80 204h1M96 204h1M130 204h1M468 204h1M502 204h1M518 204h1M567 204h1M31 205h1M79 205h1M96 205h1M129 205h1M469 205h1M502 205h1M519 205h1M567 205h1M31 206h1M79 206h1M95 206h1M129 206h1M469 206h1M503 206h1M519 206h1M567 206h1M30 207h1M78 207h1M95 207h1M128 207h1M470 207h1M503 207h1M520 207h1M568 207h1M30 208h1M78 208h1M94 208h1M128 208h1M470 208h1M504 208h1M520 208h1M568 208h1M30 209h1M77 209h1M94 209h1M127 209h1M471 209h1M504 209h1M521 209h1M568 209h1M30 210h1M77 210h1M93 210h1M127 210h1M471 210h1M505 210h1M521 210h1M568 210h1M29 211h1M77 211h1M93 211h1M126 211h1M472 211h1M505 211h1M521 211h1M569 211h1M29 212h1M76 212h1M92 212h1M126 212h1M472 212h1M506 212h1M522 212h1M569 212h1M29 213h1M76 213h1M92 213h1M125 213h1M473 213h1M506 213h1M522 213h1M569 213h1M28 214h1M75 214h1M91 214h1M125 214h1M473 214h1M507 214h1M523 214h1M570 214h1M28 215h1M75 215h1M91 215h1M124 215h1M474 215h1M507 215h1M523 215h1M570 215h1M28 216h1M75 216h1M91 216h1M124 216h1M474 216h1M507 216h1M523 216h1M570 216h1M27 217h1M74 217h1M90 217h1M123 217h1M475 217h1M508 217h1M524 217h1M571 217h1M27 218h1M74 218h1M90 218h1M123 218h1M475 218h1M508 218h1M524 218h1M571 218h1M27 219h1M74 219h1M90 219h1M122 219h1M476 219h1M508 219h1M524 219h1M571 219h1M26 220h1M73 220h1M90 220h1M122 220h1M476 220h1M508 220h1M525 220h1M572 220h1M26 221h1M73 221h1M89 221h1M122 221h1M476 221h1M509 221h1M525 221h1M572 221h1M26 222h1M73 222h1M89 222h1M121 222h1M477 222h1M509 222h1M525 222h1M572 222h1M25 223h1M73 223h1M89 223h1M121 223h1M477 223h1M509 223h1M525 223h1M573 223h1M25 224h1M72 224h1M89 224h1M120 224h1M478 224h1M509 224h1M526 224h1M573 224h1M25 225h1M72 225h1M88 225h1M120 225h1M478 225h1M510 225h1M526 225h1M573 225h1M24 226h1M72 226h1M88 226h1M119 226h1M479 226h1M510 226h1M526 226h1M574 226h1M24 227h1M71 227h1M87 227h1M119 227h1M479 227h1M511 227h1M527 227h1M574 227h1M24 228h1M71 228h1M87 228h1M119 228h1M479 228h1M511 228h1M527 228h1M574 228h1M24 229h1M70 229h1M86 229h1M118 229h1M480 229h1M512 229h1M528 229h1M574 229h1M23 230h1M70 230h1M86 230h1M118 230h1M480 230h1M512 230h1M528 230h1M575 230h1M23 231h1M70 231h1M86 231h1M118 231h1M480 231h1M512 231h1M528 231h1M575 231h1M23 232h1M69 232h1M85 232h1M117 232h1M481 232h1M513 232h1M529 232h1M575 232h1M23 233h1M69 233h1M85 233h1M117 233h1M481 233h1M513 233h1M529 233h1M575 233h1M22 234h1M69 234h1M85 234h1M117 234h1M481 234h1M513 234h1M529 234h1M576 234h1M22 235h1M69 235h1M85 235h1M116 235h1M482 235h1M513 235h1M529 235h1M576 235h1M22 236h1M68 236h1M84 236h1M116 236h1M482 236h1M514 236h1M530 236h1M576 236h1M22 237h1M68 237h1M84 237h1M116 237h1M482 237h1M514 237h1M530 237h1M576 237h1M21 238h1M68 238h1M84 238h1M115 238h1M483 238h1M514 238h1M530 238h1M577 238h1M21 239h1M68 239h1M84 239h1M115 239h1M483 239h1M514 239h1M530 239h1M577 239h1M21 240h1M67 240h1M83 240h1M115 240h1M483 240h1M515 240h1M531 240h1M577 240h1M21 241h1M67 241h1M83 241h1M114 241h1M484 241h1M515 241h1M531 241h1M577 241h1M21 242h1M67 242h1M83 242h1M114 242h1M484 242h1M515 242h1M531 242h1M577 242h1M20 243h1M67 243h1M83 243h1M114 243h1M484 243h1M515 243h1M531 243h1M578 243h1M20 244h1M66 244h1M82 244h1M114 244h1M484 244h1M516 244h1M532 244h1M578 244h1M20 245h1M66 245h1M82 245h1M113 245h1M485 245h1M516 245h1M532 245h1M578 245h1M20 246h1M66 246h1M82 246h1M113 246h1M485 246h1M516 246h1M532 246h1M578 246h1M20 247h1M66 247h1M81 247h1M113 247h1M485 247h1M517 247h1M532 247h1M578 247h1M19 248h1M65 248h1M81 248h1M112 248h1M486 248h1M517 248h1M533 248h1M579 248h1M19 249h1M65 249h1M81 249h1M112 249h1M486 249h1M517 249h1M533 249h1M579 249h1M19 250h1M65 250h1M81 250h1M112 250h1M486 250h1M517 250h1M533 250h1M579 250h1M19 251h1M65 251h1M80 251h1M111 251h1M487 251h1M518 251h1M533 251h1M579 251h1M19 252h1M65 252h1M80 252h1M111 252h1M487 252h1M518 252h1M533 252h1M579 252h1M19 253h1M65 253h1M80 253h1M111 253h1M487 253h1M518 253h1M533 253h1M579 253h1M19 254h1M64 254h1M80 254h1M110 254h1M488 254h1M518 254h1M534 254h1M579 254h1M18 255h1M64 255h1M79 255h1M110 255h1M488 255h1M519 255h1M534 255h1M580 255h1M18 256h1M64 256h1M79 256h1M110 256h1M488 256h1M519 256h1M534 256h1M580 256h1M18 257h1M64 257h1M79 257h1M110 257h1M488 257h1M519 257h1M534 257h1M580 257h1M18 258h1M64 258h1M79 258h1M109 258h1M489 258h1M519 258h1M534 258h1M580 258h1M18 259h1M64 259h1M78 259h1M109 259h1M489 259h1M520 259h1M534 259h1M580 259h1M18 260h1M63 260h1M78 260h1M109 260h1M489 260h1M520 260h1M535 260h1M580 260h1M18 261h1M63 261h1M78 261h1M109 261h1M489 261h1M520 261h1M535 261h1M580 261h1M18 262h1M63 262h1M78 262h1M109 262h1M489 262h1M520 262h1M535 262h1M580 262h1M18 263h1M63 263h1M78 263h1M108 263h1M490 263h1M520 263h1M535 263h1M580 263h1M18 264h1M62 264h1M78 264h1M108 264h1M490 264h1M520 264h1M536 264h1M580 264h1M17 265h1M62 265h1M77 265h1M108 265h1M490 265h1M521 265h1M536 265h1M581 265h1M17 266h1M62 266h1M77 266h1M108 266h1M490 266h1M521 266h1M536 266h1M581 266h1M17 267h1M62 267h1M77 267h1M108 267h1M490 267h1M521 267h1M536 267h1M581 267h1M17 268h1M62 268h1M77 268h1M108 268h1M490 268h1M521 268h1M536 268h1M581 268h1M17 269h1M62 269h1M77 269h1M107 269h1M491 269h1M521 269h1M536 269h1M581 269h1M17 270h1M61 270h1M77 270h1M107 270h1M491 270h1M521 270h1M537 270h1M581 270h1M17 271h1M61 271h1M77 271h1M107 271h1M491 271h1M521 271h1M537 271h1M581 271h1M17 272h1M61 272h1M76 272h1M107 272h1M491 272h1M522 272h1M537 272h1M581 272h1M17 273h1M61 273h1M76 273h1M107 273h1M491 273h1M522 273h1M537 273h1M581 273h1M17 274h1M61 274h1M76 274h1M107 274h1M491 274h1M522 274h1M537 274h1M581 274h1M16 275h1M61 275h1M76 275h1M107 275h1M491 275h1M522 275h1M537 275h1M582 275h1M16 276h1M61 276h1M76 276h1M106 276h1M492 276h1M522 276h1M537 276h1M582 276h1M16 277h1M61 277h1M76 277h1M106 277h1M492 277h1M522 277h1M537 277h1M582 277h1M16 278h1M61 278h1M76 278h1M106 278h1M492 278h1M522 278h1M537 278h1M582 278h1M16 279h1M61 279h1M76 279h1M106 279h1M492 279h1M522 279h1M537 279h1M582 279h1M16 280h1M61 280h1M76 280h1M106 280h1M492 280h1M522 280h1M537 280h1M582 280h1M16 281h1M61 281h1M76 281h1M106 281h1M492 281h1M522 281h1M537 281h1M582 281h1M16 282h1M61 282h1M76 282h1M106 282h1M492 282h1M522 282h1M537 282h1M582 282h1M16 283h1M61 283h1M76 283h1M105 283h1M493 283h1M522 283h1M537 283h1M582 283h1M16 284h1M61 284h1M76 284h1M105 284h1M493 284h1M522 284h1M537 284h1M582 284h1M15 285h1M61 285h1M76 285h1M105 285h1M493 285h1M522 285h1M537 285h1M583 285h1M15 286h1M61 286h1M76 286h1M105 286h1M493 286h1M522 286h1M537 286h1M583 286h1M15 287h1M60 287h1M76 287h1M105 287h1M493 287h1M522 287h1M538 287h1M583 287h1M15 288h1M60 288h1M75 288h1M105 288h1M493 288h1M523 288h1M538 288h1M583 288h1M15 289h1M60 289h1M75 289h1M105 289h1M493 289h1M523 289h1M538 289h1M583 289h1M15 290h1M60 290h1M75 290h1M105 290h1M493 290h1M523 290h1M538 290h1M583 290h1M15 291h1M60 291h1M75 291h1M105 291h1M493 291h1M523 291h1M538 291h1M583 291h1M15 292h1M60 292h1M75 292h1M105 292h1M493 292h1M523 292h1M538 292h1M583 292h1M15 293h1M60 293h1M75 293h1M105 293h1M493 293h1M523 293h1M538 293h1M583 293h1M15 294h1M60 294h1M75 294h1M105 294h1M493 294h1M523 294h1M538 294h1M583 294h1M15 295h1M60 295h1M75 295h1M105 295h1M493 295h1M523 295h1M538 295h1M583 295h1M15 296h1M60 296h1M75 296h1M105 296h1M493 296h1M523 296h1M538 296h1M583 296h1M15 297h1M60 297h1M75 297h1M105 297h1M493 297h1M523 297h1M538 297h1M583 297h1M15 298h1M60 298h1M75 298h1M105 298h1M493 298h1M523 298h1M538 298h1M583 298h1M15 299h1M60 299h1M75 299h1M105 299h1M493 299h1M523 299h1M538 299h1M583 299h1M15 300h1M60 300h1M75 300h1M105 300h1M493 300h1M523 300h1M538 300h1M583 300h1M15 301h1M60 301h1M75 301h1M105 301h1M493 301h1M523 301h1M538 301h1M583 301h1M15 302h1M60 302h1M75 302h1M105 302h1M493 302h1M523 302h1M538 302h1M583 302h1M15 303h1M60 303h1M75 303h1M105 303h1M493 303h1M523 303h1M538 303h1M583 303h1M15 304h1M60 304h1M75 304h1M105 304h1M493 304h1M523 304h1M538 304h1M583 304h1M15 305h1M60 305h1M75 305h1M105 305h1M493 305h1M523 305h1M538 305h1M583 305h1M15 306h1M60 306h1M75 306h1M105 306h1M493 306h1M523 306h1M538 306h1M583 306h1M15 307h1M60 307h1M75 307h1M105 307h1M493 307h1M523 307h1M538 307h1M583 307h1M15 308h1M60 308h1M75 308h1M105 308h1M493 308h1M523 308h1M538 308h1M583 308h1M15 309h1M60 309h1M75 309h1M105 309h1M493 309h1M523 309h1M538 309h1M583 309h1M15 310h1M60 310h1M76 310h1M105 310h1M493 310h1M522 310h1M538 310h1M583 310h1M15 311h1M61 311h1M76 311h1M105 311h1M493 311h1M522 311h1M537 311h1M583 311h1M15 312h1M61 312h1M76 312h1M105 312h1M493 312h1M522 312h1M537 312h1M583 312h1M16 313h1M61 313h1M76 313h1M105 313h1M493 313h1M522 313h1M537 313h1M582 313h1M16 314h1M61 314h1M76 314h1M105 314h1M493 314h1M522 314h1M537 314h1M582 314h1M16 315h1M61 315h1M76 315h1M105 315h1M493 315h1M522 315h1M537 315h1M582 315h1M16 316h1M61 316h1M76 316h1M106 316h1M492 316h1M522 316h1M537 316h1M582 316h1M16 317h1M61 317h1M76 317h1M106 317h1M492 317h1M522 317h1M537 317h1M582 317h1M16 318h1M61 318h1M76 318h1M106 318h1M492 318h1M522 318h1M537 318h1M582 318h1M16 319h1M61 319h1M76 319h1M106 319h1M492 319h1M522 319h1M537 319h1M582 319h1M16 320h1M61 320h1M76 320h1M106 320h1M492 320h1M522 320h1M537 320h1M582 320h1M16 321h1M61 321h1M76 321h1M106 321h1M492 321h1M522 321h1M537 321h1M582 321h1M16 322h1M61 322h1M76 322h1M106 322h1M492 322h1M522 322h1M537 322h1M582 322h1M17 323h1M61 323h1M76 323h1M107 323h1M491 323h1M522 323h1M537 323h1M581 323h1M17 324h1M61 324h1M76 324h1M107 324h1M491 324h1M522 324h1M537 324h1M581 324h1M17 325h1M61 325h1M76 325h1M107 325h1M491 325h1M522 325h1M537 325h1M581 325h1M17 326h1M61 326h1M77 326h1M107 326h1M491 326h1M521 326h1M537 326h1M581 326h1M17 327h1M61 327h1M77 327h1M107 327h1M491 327h1M521 327h1M537 327h1M581 327h1M17 328h1M62 328h1M77 328h1M107 328h1M491 328h1M521 328h1M536 328h1M581 328h1M17 329h1M62 329h1M77 329h1M108 329h1M490 329h1M521 329h1M536 329h1M581 329h1M17 330h1M62 330h1M77 330h1M108 330h1M490 330h1M521 330h1M536 330h1M581 330h1M17 331h1M62 331h1M77 331h1M108 331h1M490 331h1M521 331h1M536 331h1M581 331h1M17 332h1M62 332h1M77 332h1M108 332h1M490 332h1M521 332h1M536 332h1M581 332h1M18 333h1M62 333h1M77 333h1M108 333h1M490 333h1M521 333h1M536 333h1M580 333h1M18 334h1M63 334h1M78 334h1M108 334h1M490 334h1M520 334h1M535 334h1M580 334h1M18 335h1M63 335h1M78 335h1M108 335h1M490 335h1M520 335h1M535 335h1M580 335h1M18 336h1M63 336h1M78 336h1M109 336h1M489 336h1M520 336h1M535 336h1M580 336h1M18 337h1M63 337h1M78 337h1M109 337h1M489 337h1M520 337h1M535 337h1M580 337h1M18 338h1M64 338h1M78 338h1M109 338h1M489 338h1M520 338h1M534 338h1M580 338h1M18 339h1M64 339h1M79 339h1M109 339h1M489 339h1M519 339h1M534 339h1M580 339h1M18 340h1M64 340h1M79 340h1M109 340h1M489 340h1M519 340h1M534 340h1M580 340h1M18 341h1M64 341h1M79 341h1M110 341h1M488 341h1M519 341h1M534 341h1M580 341h1M18 342h1M64 342h1M79 342h1M110 342h1M488 342h1M519 342h1M534 342h1M580 342h1M19 343h1M64 343h1M80 343h1M110 343h1M488 343h1M518 343h1M534 343h1M579 343h1M19 344h1M65 344h1M80 344h1M110 344h1M488 344h1M518 344h1M533 344h1M579 344h1M19 345h1M65 345h1M80 345h1M111 345h1M487 345h1M518 345h1M533 345h1M579 345h1M19 346h1M65 346h1M80 346h1M111 346h1M487 346h1M518 346h1M533 346h1M579 346h1M19 347h1M65 347h1M81 347h1M111 347h1M487 347h1M517 347h1M533 347h1M579 347h1M19 348h1M65 348h1M81 348h1M112 348h1M486 348h1M517 348h1M533 348h1M579 348h1M19 349h1M65 349h1M81 349h1M112 349h1M486 349h1M517 349h1M533 349h1M579 349h1M19 350h1M66 350h1M81 350h1M112 350h1M486 350h1M517 350h1M532 350h1M579 350h1M20 351h1M66 351h1M82 351h1M113 351h1M485 351h1M516 351h1M532 351h1M578 351h1M20 352h1M66 352h1M82 352h1M113 352h1M485 352h1M516 352h1M532 352h1M578 352h1M20 353h1M66 353h1M82 353h1M113 353h1M485 353h1M516 353h1M532 353h1M578 353h1M20 354h1M67 354h1M82 354h1M114 354h1M484 354h1M516 354h1M531 354h1M578 354h1M20 355h1M67 355h1M83 355h1M114 355h1M484 355h1M515 355h1M531 355h1M578 355h1M21 356h1M67 356h1M83 356h1M114 356h1M484 356h1M515 356h1M531 356h1M577 356h1M21 357h1M67 357h1M83 357h1M114 357h1M484 357h1M515 357h1M531 357h1M577 357h1M21 358h1M67 358h1M83 358h1M115 358h1M483 358h1M515 358h1M531 358h1M577 358h1M21 359h1M68 359h1M84 359h1M115 359h1M483 359h1M514 359h1M530 359h1M577 359h1M21 360h1M68 360h1M84 360h1M115 360h1M483 360h1M514 360h1M530 360h1M577 360h1M22 361h1M68 361h1M84 361h1M116 361h1M482 361h1M514 361h1M530 361h1M576 361h1M22 362h1M68 362h1M85 362h1M116 362h1M482 362h1M513 362h1M530 362h1M576 362h1M22 363h1M69 363h1M85 363h1M116 363h1M482 363h1M513 363h1M529 363h1M576 363h1M22 364h1M69 364h1M85 364h1M117 364h1M481 364h1M513 364h1M529 364h1M576 364h1M23 365h1M69 365h1M85 365h1M117 365h1M481 365h1M513 365h1M529 365h1M575 365h1M23 366h1M69 366h1M86 366h1M117 366h1M481 366h1M512 366h1M529 366h1M575 366h1M23 367h1M70 367h1M86 367h1M118 367h1M480 367h1M512 367h1M528 367h1M575 367h1M23 368h1M70 368h1M86 368h1M118 368h1M480 368h1M512 368h1M528 368h1M575 368h1M24 369h1M71 369h1M86 369h1M118 369h1M480 369h1M512 369h1M527 369h1M574 369h1M24 370h1M71 370h1M87 370h1M119 370h1M479 370h1M511 370h1M527 370h1M574 370h1M24 371h1M71 371h1M87 371h1M119 371h1M479 371h1M511 371h1M527 371h1M574 371h1M25 372h1M72 372h1M88 372h1M119 372h1M479 372h1M510 372h1M526 372h1M573 372h1M25 373h1M72 373h1M88 373h1M120 373h1M478 373h1M510 373h1M526 373h1M573 373h1M25 374h1M72 374h1M89 374h1M120 374h1M478 374h1M509 374h1M526 374h1M573 374h1M25 375h1M73 375h1M89 375h1M121 375h1M477 375h1M509 375h1M525 375h1M573 375h1M26 376h1M73 376h1M89 376h1M121 376h1M477 376h1M509 376h1M525 376h1M572 376h1M26 377h1M73 377h1M90 377h1M122 377h1M476 377h1M508 377h1M525 377h1M572 377h1M26 378h1M73 378h1M90 378h1M122 378h1M476 378h1M508 378h1M525 378h1M572 378h1M27 379h1M74 379h1M90 379h1M123 379h1M475 379h1M508 379h1M524 379h1M571 379h1M27 380h1M74 380h1M90 380h1M123 380h1M475 380h1M508 380h1M524 380h1M571 380h1M27 381h1M74 381h1M91 381h1M124 381h1M474 381h1M507 381h1M524 381h1M571 381h1M28 382h1M75 382h1M91 382h1M124 382h1M474 382h1M507 382h1M523 382h1M570 382h1M28 383h1M75 383h1M91 383h1M125 383h1M473 383h1M507 383h1M523 383h1M570 383h1M28 384h1M76 384h1M91 384h1M125 384h1M473 384h1M507 384h1M522 384h1M570 384h1M29 385h1M76 385h1M92 385h1M126 385h1M472 385h1M506 385h1M522 385h1M569 385h1M29 386h1M76 386h1M92 386h1M126 386h1M472 386h1M506 386h1M522 386h1M569 386h1M29 387h1M77 387h1M93 387h1M127 387h1M471 387h1M505 387h1M521 387h1M569 387h1M30 388h1M77 388h1M93 388h1M127 388h1M471 388h1M505 388h1M521 388h1M568 388h1M30 389h1M78 389h1M94 389h1M128 389h1M470 389h1M504 389h1M520 389h1M568 389h1M30 390h1M78 390h1M94 390h1M128 390h1M470 390h1M504 390h1M520 390h1M568 390h1M31 391h1M79 391h1M95 391h1M129 391h1M469 391h1M503 391h1M519 391h1M567 391h1M31 392h1M79 392h1M95 392h1M129 392h1M469 392h1M503 392h1M519 392h1M567 392h1M31 393h1M80 393h1M96 393h1M130 393h1M468 393h1M502 393h1M518 393h1M567 393h1M31 394h1M80 394h1M96 394h1M130 394h1M468 394h1M502 394h1M518 394h1M567 394h1M32 395h1M81 395h1M97 395h1M131 395h1M467 395h1M501 395h1M517 395h1M566 395h1M32 396h1M81 396h1M97 396h1M131 396h1M467 396h1M501 396h1M517 396h1M566 396h1M32 397h1M81 397h1M98 397h1M132 397h1M466 397h1M500 397h1M517 397h1M566 397h1M33 398h1M82 398h1M98 398h1M132 398h1M466 398h1M500 398h1M516 398h1M565 398h1M33 399h1M82 399h1M99 399h1M133 399h1M465 399h1M499 399h1M516 399h1M565 399h1M34 400h1M83 400h1M99 400h1M134 400h1M464 400h1M499 400h1M515 400h1M564 400h1M34 401h1M83 401h1M100 401h1M134 401h1M464 401h1M498 401h1M515 401h1M564 401h1M35 402h1M84 402h1M100 402h1M135 402h1M463 402h1M498 402h1M514 402h1M563 402h1M35 403h1M84 403h1M101 403h1M136 403h1M462 403h1M497 403h1M514 403h1M563 403h1M36 404h1M85 404h1M101 404h1M136 404h1M462 404h1M497 404h1M513 404h1M562 404h1M36 405h1M85 405h1M102 405h1M137 405h1M461 405h1M496 405h1M513 405h1M562 405h1M36 406h1M86 406h1M102 406h1M137 406h1M461 406h1M496 406h1M512 406h1M562 406h1M37 407h1M86 407h1M103 407h1M138 407h1M460 407h1M495 407h1M512 407h1M561 407h1M37 408h1M87 408h1M103 408h1M139 408h1M459 408h1M495 408h1M511 408h1M561 408h1M38 409h1M87 409h1M104 409h1M139 409h1M459 409h1M494 409h1M511 409h1M560 409h1M38 410h1M88 410h1M104 410h1M140 410h1M458 410h1M494 410h1M510 410h1M560 410h1M39 411h1M88 411h1M105 411h1M141 411h1M457 411h1M493 411h1M510 411h1M559 411h1M39 412h1M89 412h1M106 412h1M141 412h1M457 412h1M492 412h1M509 412h1M559 412h1M40 413h1M89 413h1M106 413h1M142 413h1M456 413h1M492 413h1M509 413h1M558 413h1M40 414h1M90 414h1M107 414h1M143 414h1M455 414h1M491 414h1M508 414h1M558 414h1M40 415h1M90 415h1M108 415h1M144 415h1M454 415h1M490 415h1M508 415h1M558 415h1M41 416h1M91 416h1M108 416h1M144 416h1M454 416h1M490 416h1M507 416h1M557 416h1M41 417h1M91 417h1M109 417h1M145 417h1M453 417h1M489 417h1M507 417h1M557 417h1M42 418h1M92 418h1M110 418h1M146 418h1M452 418h1M488 418h1M506 418h1M556 418h1M42 419h1M93 419h1M110 419h1M147 419h1M451 419h1M488 419h1M505 419h1M556 419h1M43 420h1M93 420h1M111 420h1M148 420h1M450 420h1M487 420h1M505 420h1M555 420h1M43 421h1M94 421h1M111 421h1M149 421h1M449 421h1M487 421h1M504 421h1M555 421h1M44 422h1M94 422h1M112 422h1M149 422h1M449 422h1M486 422h1M504 422h1M554 422h1M44 423h1M95 423h1M112 423h1M150 423h1M448 423h1M486 423h1M503 423h1M554 423h1M44 424h1M95 424h1M113 424h1M151 424h1M447 424h1M485 424h1M503 424h1M554 424h1M45 425h1M96 425h1M114 425h1M152 425h1M446 425h1M484 425h1M502 425h1M553 425h1M45 426h1M97 426h1M115 426h1M153 426h1M445 426h1M483 426h1M501 426h1M553 426h1M46 427h1M97 427h1M116 427h1M153 427h1M445 427h1M482 427h1M501 427h1M552 427h1M46 428h1M98 428h1M116 428h1M154 428h1M444 428h1M482 428h1M500 428h1M552 428h1M47 429h1M99 429h1M117 429h1M155 429h1M443 429h1M481 429h1M499 429h1M551 429h1M47 430h1M100 430h1M118 430h1M156 430h1M442 430h1M480 430h1M498 430h1M551 430h1M48 431h1M100 431h1M119 431h1M157 431h1M441 431h1M479 431h1M498 431h1M550 431h1M48 432h1M101 432h1M119 432h1M158 432h1M440 432h1M479 432h1M497 432h1M550 432h1M49 433h1M102 433h1M120 433h1M159 433h1M439 433h1M478 433h1M496 433h1M549 433h1M49 434h1M102 434h1M121 434h1M160 434h1M438 434h1M477 434h1M496 434h1M549 434h1M50 435h1M103 435h1M122 435h1M161 435h1M437 435h1M476 435h1M495 435h1M548 435h1M50 436h1M104 436h1M122 436h1M162 436h1M436 436h1M476 436h1M494 436h1M548 436h1M51 437h1M105 437h1M123 437h1M163 437h1M435 437h1M475 437h1M493 437h1M547 437h1M51 438h1M105 438h1M124 438h1M164 438h1M434 438h1M474 438h1M493 438h1M547 438h1M52 439h1M106 439h1M125 439h1M165 439h1M433 439h1M473 439h1M492 439h1M546 439h1M52 440h1M107 440h1M126 440h1M166 440h1M432 440h1M472 440h1M491 440h1M546 440h1M53 441h1M107 441h1M126 441h1M167 441h1M431 441h1M472 441h1M491 441h1M545 441h1M54 442h1M108 442h1M127 442h1M168 442h1M430 442h1M471 442h1M490 442h1M544 442h1M54 443h1M109 443h1M128 443h1M169 443h1M429 443h1M470 443h1M489 443h1M544 443h1M55 444h1M110 444h1M129 444h1M170 444h1M428 444h1M469 444h1M488 444h1M543 444h1M56 445h1M110 445h1M130 445h1M171 445h2M426 445h2M468 445h1M488 445h1M542 445h1M56 446h1M111 446h1M131 446h1M173 446h1M425 446h1M467 446h1M487 446h1M542 446h1M57 447h1M112 447h1M131 447h1M174 447h1M424 447h1M467 447h1M486 447h1M541 447h1M57 448h1M113 448h1M132 448h1M175 448h1M423 448h1M466 448h1M485 448h1M541 448h1M58 449h1M114 449h1M133 449h1M176 449h1M421 449h2M465 449h1M484 449h1M540 449h1M59 450h1M114 450h1M134 450h1M177 450h2M420 450h1M464 450h1M484 450h1M539 450h1M59 451h1M115 451h1M135 451h1M179 451h1M419 451h1M463 451h1M483 451h1M539 451h1M60 452h1M116 452h1M136 452h1M180 452h1M418 452h1M462 452h1M482 452h1M538 452h1M61 453h1M117 453h1M137 453h1M181 453h1M417 453h1M461 453h1M481 453h1M537 453h1M61 454h1M118 454h1M138 454h1M182 454h2M415 454h2M460 454h1M480 454h1M537 454h1M62 455h1M119 455h1M139 455h1M184 455h1M414 455h1M459 455h1M479 455h1M536 455h1M63 456h1M119 456h1M140 456h1M185 456h1M413 456h1M458 456h1M479 456h1M535 456h1M63 457h1M120 457h1M141 457h1M186 457h2M411 457h2M457 457h1M478 457h1M535 457h1M64 458h1M121 458h1M142 458h1M188 458h1M410 458h1M456 458h1M477 458h1M534 458h1M65 459h1M122 459h1M143 459h1M189 459h2M408 459h2M455 459h1M476 459h1M533 459h1M65 460h1M123 460h1M144 460h1M191 460h1M407 460h1M454 460h1M475 460h1M533 460h1M66 461h1M124 461h1M145 461h1M192 461h2M405 461h2M453 461h1M474 461h1M532 461h1M67 462h1M125 462h1M146 462h1M194 462h2M403 462h2M452 462h1M473 462h1M531 462h1M67 463h1M125 463h1M147 463h1M196 463h1M402 463h1M451 463h1M473 463h1M531 463h1M68 464h1M126 464h1M148 464h1M197 464h2M400 464h2M450 464h1M472 464h1M530 464h1M68 465h1M127 465h1M149 465h1M199 465h1M399 465h1M449 465h1M471 465h1M530 465h1M69 466h1M128 466h1M150 466h1M200 466h2M397 466h2M448 466h1M470 466h1M529 466h1M70 467h1M129 467h1M151 467h1M202 467h1M395 467h2M446 467h2M469 467h1M528 467h1M71 468h1M130 468h1M152 468h2M203 468h2M393 468h2M445 468h1M468 468h1M527 468h1M71 469h1M131 469h1M154 469h1M205 469h2M391 469h2M444 469h1M467 469h1M527 469h1M72 470h1M132 470h1M155 470h1M207 470h2M389 470h2M443 470h1M466 470h1M526 470h1M73 471h1M133 471h1M156 471h1M209 471h2M387 471h2M442 471h1M465 471h1M525 471h1M74 472h1M134 472h1M157 472h1M211 472h2M385 472h2M440 472h2M464 472h1M524 472h1M74 473h1M135 473h1M158 473h2M213 473h2M383 473h2M439 473h1M462 473h2M524 473h1M75 474h1M136 474h2M160 474h1M215 474h2M381 474h2M438 474h1M461 474h1M523 474h1M76 475h1M138 475h1M161 475h1M217 475h2M379 475h2M437 475h1M460 475h1M522 475h1M77 476h1M139 476h1M162 476h2M219 476h3M377 476h2M435 476h2M459 476h1M521 476h1M78 477h1M140 477h1M164 477h1M222 477h2M375 477h2M434 477h1M458 477h1M520 477h1M79 478h1M141 478h1M165 478h1M224 478h2M373 478h2M433 478h1M457 478h1M519 478h1M80 479h1M142 479h2M166 479h2M226 479h3M370 479h3M431 479h2M455 479h2M518 479h1M81 480h1M144 480h1M168 480h1M229 480h3M367 480h3M430 480h1M454 480h1M517 480h1M82 481h1M145 481h1M169 481h1M232 481h3M364 481h3M429 481h1M453 481h1M516 481h1M83 482h1M146 482h1M170 482h1M235 482h3M361 482h3M427 482h2M452 482h1M515 482h1M84 483h1M147 483h1M171 483h2M238 483h3M358 483h3M426 483h1M451 483h1M514 483h1M84 484h1M148 484h1M173 484h1M241 484h4M354 484h4M425 484h1M449 484h2M514 484h1M85 485h1M149 485h2M174 485h1M245 485h3M351 485h3M424 485h1M448 485h1M513 485h1M86 486h1M151 486h1M175 486h2M248 486h3M348 486h3M422 486h2M447 486h1M512 486h1M87 487h1M152 487h1M177 487h2M251 487h3M345 487h3M420 487h2M446 487h1M511 487h1M87 488h1M153 488h2M179 488h2M254 488h4M341 488h4M418 488h2M444 488h2M511 488h1M88 489h1M155 489h1M181 489h1M258 489h5M336 489h5M417 489h1M443 489h1M510 489h1M89 490h1M156 490h1M182 490h2M263 490h6M329 490h7M415 490h2M442 490h1M509 490h1M90 491h1M157 491h2M184 491h1M269 491h7M323 491h6M414 491h1M440 491h2M508 491h1M91 492h1M159 492h1M185 492h2M276 492h7M316 492h7M412 492h2M439 492h1M507 492h1M92 493h1M160 493h2M187 493h1M283 493h33M411 493h1M437 493h2M506 493h1M93 494h1M162 494h1M188 494h2M409 494h2M436 494h1M505 494h1M94 495h1M163 495h1M190 495h2M407 495h2M435 495h1M504 495h1M95 496h1M164 496h2M192 496h2M405 496h2M433 496h2M503 496h1M96 497h1M166 497h1M194 497h2M403 497h2M432 497h1M502 497h1M97 498h1M167 498h2M196 498h2M401 498h2M430 498h2M501 498h1M98 499h1M169 499h1M198 499h2M399 499h2M429 499h1M500 499h1M99 500h1M170 500h1M200 500h2M397 500h2M428 500h1M499 500h1M100 501h1M171 501h2M202 501h2M395 501h2M426 501h2M498 501h1M101 502h1M173 502h1M204 502h2M393 502h2M425 502h1M497 502h1M102 503h1M174 503h2M206 503h2M391 503h2M423 503h2M496 503h1M103 504h1M176 504h2M208 504h2M389 504h2M421 504h2M495 504h1M104 505h1M178 505h2M210 505h2M387 505h2M419 505h2M494 505h1M105 506h1M180 506h1M212 506h2M385 506h2M418 506h1M493 506h1M106 507h1M181 507h2M214 507h3M381 507h4M416 507h2M492 507h1M107 508h1M183 508h2M217 508h4M377 508h4M414 508h2M491 508h1M108 509h1M185 509h2M221 509h4M374 509h3M412 509h2M490 509h1M109 510h1M187 510h1M225 510h2M372 510h2M410 510h2M489 510h1M110 511h1M188 511h2M227 511h2M370 511h2M408 511h2M487 511h2M111 512h2M190 512h2M229 512h3M366 512h4M406 512h2M486 512h1M113 513h1M192 513h2M232 513h4M362 513h4M404 513h2M485 513h1M114 514h1M194 514h3M236 514h4M359 514h3M402 514h2M483 514h2M115 515h2M197 515h2M240 515h4M355 515h4M400 515h2M482 515h1M117 516h1M199 516h2M244 516h3M351 516h4M398 516h2M481 516h1M118 517h1M201 517h2M247 517h4M347 517h4M395 517h3M480 517h1M119 518h1M203 518h2M251 518h4M343 518h4M393 518h2M479 518h1M120 519h1M205 519h2M255 519h4M339 519h4M391 519h2M478 519h1M121 520h1M207 520h2M259 520h6M334 520h5M389 520h2M477 520h1M122 521h1M209 521h3M265 521h7M326 521h8M387 521h2M476 521h1M123 522h1M212 522h2M272 522h16M310 522h16M384 522h3M475 522h1M124 523h1M214 523h3M288 523h22M382 523h2M474 523h1M125 524h1M217 524h3M379 524h3M472 524h2M126 525h2M220 525h4M375 525h4M471 525h1M128 526h1M224 526h3M372 526h3M470 526h1M129 527h1M227 527h2M369 527h3M468 527h2M130 528h2M229 528h3M367 528h2M467 528h1M132 529h1M232 529h4M363 529h4M466 529h1M133 530h2M236 530h4M359 530h4M464 530h2M135 531h1M240 531h4M354 531h5M462 531h2M136 532h2M244 532h4M350 532h4M461 532h1M138 533h2M248 533h6M344 533h6M459 533h2M140 534h1M254 534h6M338 534h6M458 534h1M141 535h2M260 535h4M334 535h4M456 535h2M143 536h1M264 536h6M328 536h6M455 536h1M144 537h2M270 537h17M311 537h17M453 537h2M146 538h1M287 538h24M452 538h1M147 539h2M450 539h2M149 540h1M449 540h1M150 541h2M447 541h2M152 542h1M445 542h2M153 543h2M444 543h1M155 544h2M442 544h2M157 545h1M441 545h1M158 546h2M439 546h2M160 547h2M437 547h2M162 548h2M435 548h2M164 549h2M433 549h2M166 550h2M431 550h2M168 551h2M429 551h2M170 552h2M427 552h2M172 553h2M425 553h2M174 554h3M422 554h3M177 555h2M420 555h2M179 556h2M418 556h2M181 557h2M416 557h2M183 558h3M413 558h3M186 559h2M411 559h2M188 560h2M409 560h2M190 561h2M407 561h2M192 562h3M404 562h3M195 563h2M402 563h2M197 564h2M400 564h2M199 565h2M398 565h2M201 566h3M395 566h3M204 567h3M391 567h4M207 568h4M388 568h3M211 569h3M385 569h3M214 570h3M382 570h3M217 571h3M379 571h3M220 572h3M376 572h3M223 573h3M372 573h4M226 574h4M369 574h3M230 575h4M365 575h4M234 576h4M361 576h4M238 577h5M356 577h5M243 578h5M351 578h5M248 579h7M343 579h8M255 580h10M333 580h10M265 581h10M323 581h10M275 582h10M313 582h10M285 583h28"/>
<path stroke="#ff0000" d="M168 61h3M178 61h3M167 62h1M171 62h1M177 62h1M181 62h1M166 63h1M172 63h1M176 63h1M182 63h1M166 64h1M172 64h1M176 64h1M182 64h1M166 65h1M172 65h1M176 65h1M182 65h1M167 66h1M173 66h1M175 66h1M181 66h1M168 67h1M173 67h1M175 67h1M180 67h1M173 68h1M175 68h1M173 69h1M175 69h1M174 70h1M174 71h1M174 72h1M174 73h1M174 74h1M174 75h1M174 76h1M174 77h1"/>
<path stroke="#ffff00" d="M69 154h1M81 154h1M70 155h1M80 155h1M70 156h1M80 156h1M71 157h2M78 157h2M73 158h5M72 159h1M78 159h1M71 160h1M79 160h1M70 161h1M80 161h1M69 162h1M81 162h1M69 163h1M81 163h1M69 164h1M81 164h1M69 165h1M81 165h1M69 166h1M81 166h1M70 167h1M80 167h1M71 168h1M79 168h1M72 169h1M78 169h1M73 170h5"/>
<path stroke="#00ff00" d="M31 285h1M45 285h1M32 286h1M44 286h1M33 287h11M35 288h1M41 288h1M35 289h1M41 289h1M35 290h1M41 290h1M35 291h1M41 291h1M35 292h1M41 292h1M35 293h1M41 293h1M35 294h1M41 294h1M35 295h1M41 295h1M35 296h1M41 296h1M35 297h1M41 297h1M35 298h1M41 298h1M33 299h11M32 300h1M44 300h1M31 301h1M45 301h1"/>
<path stroke="#0000ff" d="M67 417h5M64 418h3M72 418h1M63 419h1M73 419h3M62 420h1M72 420h1M76 420h1M61 421h1M71 421h1M77 421h1M71 422h1M77 422h1M63 423h3M71 423h1M77 423h1M62 424h1M66 424h1M72 424h1M76 424h1M61 425h1M67 425h1M73 425h3M61 426h1M67 426h1M61 427h1M67 427h1M77 427h1M62 428h1M66 428h1M76 428h1M63 429h3M75 429h1M66 430h1M72 430h3M67 431h5"/>
<path stroke="#ff0000" d="M160 515h5M159 516h1M165 516h1M158 517h1M166 517h1M157 518h1M167 518h1M156 519h1M168 519h1M156 520h1M168 520h1M156 521h1M168 521h1M156 522h1M168 522h1M156 523h1M168 523h1M157 524h1M167 524h1M158 525h1M166 525h1M158 526h1M166 526h1M154 527h1M158 527h1M166 527h1M155 528h1M157 528h1M167 528h1M156 529h1M168 529h1M169 530h1M170 531h1"/>
<path stroke="#ffff00" d="M285 553h1M289 553h1M293 553h1M286 554h1M288 554h1M290 554h1M292 554h1M294 554h1M287 555h1M291 555h1M295 555h1M299 555h1M287 556h1M291 556h1M295 556h1M298 556h2M287 557h1M291 557h1M295 557h1M297 557h1M299 557h1M287 558h1M291 558h1M295 558h2M299 558h1M287 559h1M291 559h1M295 559h1M299 559h1M287 560h1M291 560h1M295 560h1M299 560h1M287 561h1M291 561h1M295 561h1M299 561h1M287 562h1M291 562h1M295 562h1M299 562h1M287 563h1M291 563h1M295 563h1M299 563h1M287 564h1M291 564h1M295 564h1M299 564h1M287 565h1M291 565h1M295 565h1M299 565h1M287 566h1M291 566h1M296 566h1M298 566h1M287 567h1M291 567h1M297 567h1M296 568h1M298 568h1M295 569h1M299 569h1"/>
<path stroke="#00ff00" d="M422 525h5M421 526h1M427 526h1M420 527h1M428 527h1M420 528h1M428 528h1M420 529h1M428 529h1M421 530h1M427 530h1M416 531h7M426 531h7M416 535h17"/>
<path stroke="#0000ff" d="M515 428h1M519 428h1M523 428h1M516 429h1M518 429h1M520 429h1M522 429h1M524 429h1M517 430h1M521 430h1M525 430h1M517 431h1M521 431h1M525 431h1M517 432h1M521 432h1M525 432h1M517 433h1M521 433h1M525 433h1M517 434h1M521 434h1M525 434h1M517 435h1M521 435h1M525 435h1M517 436h1M521 436h1M525 436h1M517 437h1M521 437h1M525 437h1M517 438h1M521 438h1M525 438h1M517 439h1M521 439h1M525 439h1M530 439h1M517 440h1M521 440h1M525 440h1M529 440h3M517 441h1M521 441h1M525 441h1M530 441h1M517 442h1M521 442h1M525 442h1M530 442h1M526 443h1M529 443h1M527 444h2"/>
<path stroke="#ff0000" d="M565 297h5M568 298h2M567 299h1M569 299h1M566 300h1M569 300h1M565 301h1M569 301h1M564 302h1M555 303h1M563 303h1M556 304h1M562 304h1M557 305h1M561 305h1M558 306h1M560 306h1M559 307h1M558 308h1M560 308h1M557 309h1M561 309h1M556 310h1M562 310h1M555 311h1M563 311h1M554 312h1M553 313h1"/>
<path stroke="#ffff00" d="M523 166h1M529 166h1M533 166h3M522 167h2M529 167h2M532 167h1M536 167h1M521 168h1M523 168h1M529 168h1M531 168h1M537 168h1M523 169h1M528 169h1M530 169h1M537 169h1M523 170h1M527 170h1M531 170h1M537 170h1M523 171h1M527 171h1M532 171h1M536 171h1M523 172h1M527 172h1M533 172h3M523 173h1M527 173h1M534 173h1M523 174h1M527 174h1M535 174h1M524 175h1M526 175h1M536 175h1M525 176h1M537 176h1M525 177h1M537 177h1M525 178h1M537 178h1M525 179h1M537 179h1M525 180h1M537 180h1M536 181h1M535 182h1"/>
<path stroke="#00ff00" d="M432 67h1M438 67h1M444 67h1M431 68h2M437 68h2M443 68h1M430 69h1M432 69h1M436 69h1M438 69h1M442 69h1M430 70h1M433 70h1M436 70h1M439 70h1M442 70h1M430 71h1M434 71h1M436 71h1M440 71h1M442 71h1M429 72h1M434 72h2M440 72h2M428 73h1M434 73h1M440 73h1M432 77h1M438 77h1M444 77h1M431 78h2M437 78h2M443 78h1M430 79h1M432 79h1M436 79h1M438 79h1M442 79h1M430 80h1M433 80h1M436 80h1M439 80h1M442 80h1M430 81h1M434 81h1M436 81h1M440 81h1M442 81h1M429 82h1M434 82h2M440 82h2M428 83h1M434 83h1M440 83h1"/>
<path stroke="#0000ff" d="M297 29h1M313 29h1M298 30h1M312 30h1M299 31h1M311 31h1M300 32h1M310 32h1M300 33h1M310 33h1M301 34h1M309 34h1M301 35h1M309 35h1M301 36h1M309 36h1M297 37h17M301 38h1M309 38h1M301 39h1M309 39h1M301 40h1M309 40h1M300 41h1M310 41h1M300 42h1M310 42h1M299 43h1M311 43h1M298 44h1M312 44h1M297 45h1M313 45h1"/>
<path stroke="#ffffff" d="M337 136h1M337 137h1M337 138h1M336 139h1M336 140h1M336 141h1M336 142h1M336 143h1M336 144h1M335 145h1M335 146h1M335 147h1M335 148h1"/>
<path stroke="#ffff00" d="M333 153h1"/>
<path stroke="#ffffff" d="M131 299h13"/>
<path stroke="#ff0000" d="M149 299h1"/>
<path stroke="#7f7f7f" d="M374 149h1M373 150h1M373 151h1M372 152h1M372 153h1M371 154h1M371 155h1M370 156h1M370 157h1M369 158h1M369 159h1M368 160h1"/>
<path stroke="#007f7f" d="M377 130h5M376 131h1M382 131h1M375 132h1M383 132h1M374 133h1M384 133h1M373 134h1M385 134h1M373 135h1M385 135h1M373 136h1M385 136h1M373 137h1M385 137h1M373 138h1M385 138h1M374 139h1M384 139h1M375 140h1M383 140h1M375 141h1M383 141h1M373 142h3M383 142h3M372 143h1M375 143h1M383 143h1M386 143h1M371 144h1M375 144h1M383 144h1M387 144h1M372 145h1M374 145h1M384 145h1M386 145h1M373 146h1M385 146h1"/>
<path stroke="#007f7f" d="M366 165h1"/>
<path stroke="#7f7f7f" d="M328 452h1M328 453h1M329 454h1M329 455h1M329 456h1M329 457h1M330 458h1M330 459h1M330 460h1M330 461h1M331 462h1M331 463h1M331 464h1"/>
<path stroke="#0000ff" d="M327 467h1M332 467h3M339 467h1M327 468h1M331 468h1M335 468h1M339 468h1M327 469h1M331 469h1M335 469h1M339 469h1M327 470h1M331 470h1M335 470h1M339 470h1M327 471h1M332 471h3M339 471h1M328 472h1M338 472h1M328 473h1M338 473h1M329 474h2M336 474h2M331 475h5M333 476h1M333 477h1M333 478h1M329 479h9M333 480h1M333 481h1M333 482h1M333 483h1"/>
<path stroke="#0000ff" d="M327 446h1"/>
<path stroke="#7f7f7f" d="M450 336h1M451 337h2M453 338h1M454 339h2M456 340h2M458 341h1M459 342h2M461 343h1"/>
<path stroke="#0000ff" d="M466 338h1M472 338h1M478 338h1M466 339h1M472 339h1M478 339h1M465 340h3M470 340h5M477 340h3M466 341h1M472 341h1M478 341h1M466 342h1M472 342h1M478 342h1M467 343h1M472 343h1M477 343h1M467 344h1M472 344h1M477 344h1M468 345h2M472 345h1M475 345h2M470 346h5M472 347h1M472 348h1M472 349h1M468 350h9M472 351h1M472 352h1M472 353h1M472 354h1"/>
<path stroke="#0000ff" d="M444 335h1"/>
<path stroke="#7f7f7f" d="M362 441h1M362 442h1M363 443h1M363 444h1M364 445h1M364 446h1M365 447h1M365 448h1M366 449h1M366 450h1M367 451h1M367 452h1"/>
<path stroke="#00ff00" d="M366 455h1M378 455h1M367 456h1M377 456h1M368 457h1M376 457h1M368 458h1M376 458h1M368 459h1M372 459h1M376 459h1M368 460h1M372 460h1M376 460h1M368 461h9M368 462h1M372 462h1M376 462h1M368 463h1M372 463h1M376 463h1M367 464h1M372 464h1M377 464h1M366 465h1M372 465h1M378 465h1M372 466h1M371 467h3M370 468h1M374 468h1M370 469h1M374 469h1M370 470h1M374 470h1M371 471h3"/>
<path stroke="#00ff00" d="M360 436h1"/>
<path stroke="#ffffff" d="M145 233h2M147 234h3M150 235h2M152 236h3M155 237h2"/>
<path stroke="#ffff00" d="M132 220h1M132 221h1M128 222h9M132 223h1M132 224h1M132 225h1M132 226h1M136 226h3M132 227h1M135 227h1M139 227h1M132 228h3M140 228h1M132 229h1M140 229h1M132 230h1M140 230h1M132 231h1M139 231h1M132 232h1M138 232h1M132 233h1M138 233h1M132 234h1M138 234h1M139 235h1M140 236h1"/>
<path stroke="#ffff00" d="M162 240h1"/>
<path stroke="#7f7f7f" d="M464 325h2M462 326h2M459 327h3M456 328h3M454 329h2M452 330h2"/>
<path stroke="#ff0000" d="M482 319h1M481 320h1M471 321h2M480 321h1M473 322h1M480 322h1M474 323h1M480 323h1M474 324h1M480 324h1M474 325h1M480 325h1M473 326h1M480 326h1M473 327h1M480 327h1M472 328h1M480 328h1M472 329h1M480 329h1M471 330h1M480 330h1M471 331h1M480 331h1M470 332h1M480 332h1M470 333h15M480 334h1M480 335h1"/>
<path stroke="#ff0000" d="M446 329h1"/>
<path stroke="#ffffff" d="M430 194h1M429 195h1M427 196h2M426 197h1M425 198h1M424 199h1M422 200h2M421 201h1M420 202h1"/>
<path stroke="#ff0000" d="M442 179h6M446 180h2M445 181h1M447 181h1M444 182h1M447 182h1M443 183h1M447 183h1M442 184h1M447 184h1M434 185h5M441 185h1M433 186h1M439 186h2M432 187h1M440 187h1M431 188h1M441 188h1M431 189h1M441 189h1M431 190h1M441 190h1M431 191h1M441 191h1M431 192h1M441 192h1M432 193h1M440 193h1M433 194h1M439 194h1M434 195h5"/>
<path stroke="#ff0000" d="M416 205h1"/>
<path stroke="#ffffff" d="M256 137h1M256 138h1M257 139h1M257 140h1M257 141h1M257 142h1M258 143h1M258 144h1M258 145h1M258 146h1M259 147h1M259 148h1M259 149h1"/>
<path stroke="#00ff00" d="M250 118h5M249 119h1M255 119h1M248 120h1M256 120h1M248 121h1M256 121h1M248 122h1M256 122h1M248 123h1M256 123h1M248 124h1M256 124h1M249 125h1M255 125h1M250 126h5M252 127h1M252 128h1M252 129h1M248 130h9M252 131h1M252 132h1M252 133h1M252 134h1"/>
<path stroke="#00ff00" d="M260 155h1"/>
<path stroke="#7f7f7f" d="M195 168h1M195 169h1M196 170h1M196 171h1M197 172h1M197 173h1M198 174h1M198 175h1M199 176h1M199 177h1M200 178h1M200 179h1"/>
<path stroke="#00ff00" d="M184 150h1M192 150h1M185 151h1M191 151h1M186 152h5M185 153h1M191 153h1M184 154h1M192 154h1M184 155h1M192 155h1M184 156h1M192 156h1M184 157h1M192 157h1M184 158h1M192 158h1M185 159h1M191 159h1M186 160h5M188 161h1M188 162h1M188 163h1M184 164h9M188 165h1M188 166h1"/>
<path stroke="#00ff00" d="M204 183h1"/>
<path stroke="#ffffff" d="M182 179h1M183 180h1M183 181h1M184 182h1M184 183h1M185 184h1M185 185h1M186 186h1M186 187h1M187 188h1M187 189h1M188 190h1"/>
<path stroke="#0000ff" d="M169 163h5M168 164h1M174 164h2M167 165h1M176 165h1M168 166h1M177 166h1M169 167h1M178 167h1M170 168h1M178 168h1M170 169h1M179 169h1M171 170h1M179 170h1M171 171h1M179 171h1M171 172h1M179 172h1M170 173h1M179 173h1M170 174h1M178 174h1M169 175h1M178 175h1M168 176h1M177 176h1M167 177h1M176 177h1M168 178h1M174 178h2M169 179h5"/>
<path stroke="#0000ff" d="M193 194h1"/>
<path stroke="#ffffff" d="M170 193h7M177 194h8"/>
<path stroke="#ff0000" d="M158 177h5M156 178h2M163 178h2M155 179h1M165 179h1M154 180h1M166 180h1M153 181h1M167 181h1M153 182h1M167 182h1M152 183h1M168 183h1M152 184h1M168 184h1M152 185h1M160 185h1M168 185h1M152 186h1M168 186h1M152 187h1M168 187h1M153 188h1M167 188h1M153 189h1M167 189h1M154 190h1M166 190h1M155 191h1M165 191h1M156 192h2M163 192h2M158 193h5"/>
<path stroke="#ff0000" d="M188 198h1"/>
<path stroke="#ff0000" d="M332 159h1M333 160h1M333 161h1M334 162h1M334 163h1M335 164h1M336 165h1M336 166h1M337 167h1M337 168h1M338 169h1M339 170h1M339 171h1M340 172h1M341 173h1M341 174h1M342 175h1M342 176h1M343 177h1M344 178h1M344 179h1M345 180h1M345 181h1M346 182h1M347 183h1M347 184h1M348 185h1M348 186h1M349 187h1M350 188h1M350 189h1M351 190h1M351 191h1M352 192h1M353 193h1M353 194h1M354 195h1M355 196h1M355 197h1M356 198h1M356 199h1M357 200h1M358 201h1M358 202h1M359 203h1M359 204h1M360 205h1M361 206h1M361 207h1M362 208h1M362 209h1M363 210h1M364 211h1M364 212h1M365 213h1M366 214h1M366 215h1M367 216h1M367 217h1M368 218h1M369 219h1M369 220h1M370 221h1M370 222h1M371 223h1M372 224h1M372 225h1M373 226h1M373 227h1M374 228h1M375 229h1M375 230h1M376 231h1M376 232h1M377 233h1M378 234h1M378 235h1M379 236h1M380 237h1M380 238h1M381 239h1M381 240h1M382 241h1M383 242h1M383 243h1M384 244h1M384 245h1M385 246h1M386 247h1M386 248h1M387 249h1M387 250h1M388 251h1M389 252h1M389 253h1M390 254h1M390 255h1M391 256h1M392 257h1M392 258h1M393 259h1M394 260h1M394 261h1M395 262h1M395 263h1M396 264h1M397 265h1M397 266h1M398 267h1M398 268h1M399 269h1M400 270h1M400 271h1M401 272h1M401 273h1M402 274h1M403 275h1M403 276h1M404 277h1M404 278h1M405 279h1M406 280h1M406 281h1M407 282h1M408 283h1M408 284h1M409 285h1M409 286h1M410 287h1M411 288h1M411 289h1M412 290h1M412 291h1M413 292h1M414 293h1M414 294h1M415 295h1M415 296h1M416 297h1M417 298h1M417 299h1M418 300h1M419 301h1M419 302h1M420 303h1M420 304h1M421 305h1M422 306h1M422 307h1M423 308h1M423 309h1M424 310h1M425 311h1M425 312h1M426 313h1M426 314h1M427 315h1M428 316h1M428 317h1M429 318h1M429 319h1M430 320h1M431 321h1M431 322h1M432 323h1M433 324h1M433 325h1M434 326h1M434 327h1M435 328h1M436 329h1M436 330h1M437 331h1M437 332h1M438 333h1"/>
<path stroke="#ff0000" d="M332 159h1M333 160h1M333 161h1M334 162h1M335 163h1M335 164h1M336 165h1M336 166h1M337 167h1M338 168h1M338 169h1M339 170h1M340 171h1M340 172h1M341 173h1M342 174h1M342 175h1M343 176h1M344 177h1M344 178h1M345 179h1M345 180h1M346 181h1M347 182h1M347 183h1M348 184h1M349 185h1M349 186h1M350 187h1M351 188h1M351 189h1M352 190h1M352 191h1M353 192h1M354 193h1M354 194h1M355 195h1M356 196h1M356 197h1M357 198h1M358 199h1M358 200h1M359 201h1M359 202h1M360 203h1M361 204h1M361 205h1M362 206h1M363 207h1M363 208h1M364 209h1M365 210h1M365 211h1M366 212h1M367 213h1M367 214h1M368 215h1M368 216h1M369 217h1M370 218h1M370 219h1M371 220h1M372 221h1M372 222h1M373 223h1M374 224h1M374 225h1M375 226h1M375 227h1M376 228h1M377 229h1M377 230h1M378 231h1M379 232h1M379 233h1M380 234h1M381 235h1M381 236h1M382 237h1M382 238h1M383 239h1M384 240h1M384 241h1M385 242h1M386 243h1M386 244h1M387 245h1M388 246h1M388 247h1M389 248h1M390 249h1M390 250h1M391 251h1M391 252h1M392 253h1M393 254h1M393 255h1M394 256h1M395 257h1M395 258h1M396 259h1M397 260h1M397 261h1M398 262h1M398 263h1M399 264h1M400 265h1M400 266h1M401 267h1M402 268h1M402 269h1M403 270h1M404 271h1M404 272h1M405 273h1M405 274h1M406 275h1M407 276h1M407 277h1M408 278h1M409 279h1M409 280h1M410 281h1M411 282h1M411 283h1M412 284h1M413 285h1M413 286h1M414 287h1M414 288h1M415 289h1M416 290h1M416 291h1M417 292h1M418 293h1M418 294h1M419 295h1M420 296h1M420 297h1M421 298h1M421 299h1M422 300h1M423 301h1M423 302h1M424 303h1M425 304h1M425 305h1M426 306h1M427 307h1M427 308h1M428 309h1M428 310h1M429 311h1M430 312h1M430 313h1M431 314h1M432 315h1M432 316h1M433 317h1M434 318h1M434 319h1M435 320h1M436 321h1M436 322h1M437 323h1M437 324h1M438 325h1M439 326h1M439 327h1M440 328h1"/>
<path stroke="#00ff00" d="M156 300h1M159 302h1M162 304h1M165 305h1M168 307h1M171 309h1M174 311h1M177 313h1M180 315h1M183 317h1M186 319h1M189 321h1M192 323h1M195 325h1M198 327h1M201 329h1M204 331h1M207 333h1M210 335h1M213 337h1M216 339h1M219 341h1M222 342h1M225 344h1M228 346h1M231 348h1M234 350h1M237 352h1M240 354h1M243 356h1M246 358h1M249 360h1M252 362h1M255 364h1M258 366h1M261 368h1M264 370h1M267 372h1M270 374h1M273 376h1M276 377h1M279 379h1M282 381h1M285 383h1M288 385h1M291 387h1M294 389h1M297 391h1M300 393h1M303 395h1M306 397h1M309 399h1M312 401h1M315 403h1M318 405h1M321 407h1M324 409h1M327 411h1M330 412h1M333 414h1M336 416h1M339 418h1M342 420h1M345 422h1M348 424h1M351 426h1M354 428h1M357 430h1"/>
<path stroke="#00ffff" d="M438 333h1M435 336h1M432 339h1M429 342h1M426 344h1M423 347h1M420 350h1M417 353h1M414 356h1M411 359h1M408 362h1M405 365h1M402 367h1M399 370h1M396 373h1M393 376h1M390 379h1M387 382h1M384 385h1M381 387h1M378 390h1M375 393h1M372 396h1M369 399h1M366 402h1M363 405h1M360 408h1M357 410h1M354 413h1M351 416h1M348 419h1M345 422h1M342 425h1M339 428h1M336 430h1M333 433h1M330 436h1M327 439h1"/>
<path stroke="#00ff00" d="M167 242h1M169 245h1M172 248h1M174 251h1M177 254h1M179 257h1M181 260h1M184 263h1M186 266h1M189 269h1M191 272h1M194 275h1M196 278h1M198 281h1M201 284h1M203 287h1M206 290h1M208 293h1M210 296h1M213 299h1M215 302h1M218 305h1M220 308h1M222 311h1M225 314h1M227 317h1M230 320h1M232 323h1M234 326h1M237 329h1M239 332h1M242 335h1M244 338h1M247 341h1M249 344h1M251 347h1M254 350h1M256 353h1M259 356h1M261 359h1M263 362h1M266 365h1M268 368h1M271 371h1M273 374h1M275 377h1M278 380h1M280 383h1M283 386h1M285 389h1M287 392h1M290 395h1M292 398h1M295 401h1M297 404h1M300 407h1M302 410h1M304 413h1M307 416h1M309 419h1M312 422h1M314 425h1M316 428h1M319 431h1M321 434h1M324 437h1M326 440h1"/>
<path stroke="#00ff00" d="M411 209h1M410 211h1M410 213h1M409 215h1M408 217h1M407 219h1M407 221h1M406 223h1M405 225h1M404 227h1M404 229h1M403 231h1M402 233h1M401 235h1M401 237h1M400 239h1M399 241h1M398 243h1M398 245h1M397 247h1M396 249h1M396 251h1M395 253h1M394 255h1M393 257h1M393 259h1M392 261h1M391 263h1M390 265h1M390 267h1M389 269h1M388 271h1M387 273h1M387 275h1M386 277h1M385 279h1M385 281h1M384 283h1M383 285h1M382 287h1M382 289h1M381 291h1M380 293h1M379 295h1M379 297h1M378 299h1M377 301h1M376 303h1M376 305h1M375 307h1M374 309h1M373 311h1M373 313h1M372 315h1M371 317h1M371 319h1M370 321h1M369 323h1M368 325h1M368 327h1M367 329h1M366 331h1M365 333h1M365 335h1M364 337h1M363 339h1M362 341h1M362 343h1M361 345h1M360 347h1M359 349h1M359 351h1M358 353h1M357 355h1M357 357h1M356 359h1M355 361h1M354 363h1M354 365h1M353 367h1M352 369h1M351 371h1M351 373h1M350 375h1M349 377h1M348 379h1M348 381h1M347 383h1M346 385h1M346 387h1M345 389h1M344 391h1M343 393h1M343 395h1M342 397h1M341 399h1M340 401h1M340 403h1M339 405h1M338 407h1M337 409h1M337 411h1M336 413h1M335 415h1M334 417h1M334 419h1M333 421h1M332 423h1M332 425h1M331 427h1M330 429h1M329 431h1M329 433h1M328 435h1M327 437h1M326 439h1"/>
<path stroke="#0000ff" d="M262 160h1M263 163h1M263 166h1M264 169h1M265 172h1M265 175h1M266 178h1M267 181h1M267 184h1M268 187h1M269 190h1M270 193h1M270 196h1M271 199h1M272 202h1M272 205h1M273 208h1M274 211h1M274 214h1M275 217h1M276 220h1M276 223h1M277 226h1M278 229h1M278 232h1M279 235h1M280 238h1M281 241h1M281 244h1M282 247h1M283 250h1M283 253h1M284 256h1M285 259h1M285 262h1M286 265h1M287 268h1M287 271h1M288 274h1M289 277h1M289 280h1M290 283h1M291 286h1M291 289h1M292 292h1M293 295h1M294 298h1M294 301h1M295 304h1M296 307h1M296 310h1M297 313h1M298 316h1M298 319h1M299 322h1M300 325h1M300 328h1M301 331h1M302 334h1M302 337h1M303 340h1M304 343h1M305 346h1M305 349h1M306 352h1M307 355h1M307 358h1M308 361h1M309 364h1M309 367h1M310 370h1M311 373h1M311 376h1M312 379h1M313 382h1M313 385h1M314 388h1M315 391h1M315 394h1M316 397h1M317 400h1M318 403h1M318 406h1M319 409h1M320 412h1M320 415h1M321 418h1M322 421h1M322 424h1M323 427h1M324 430h1M324 433h1M325 436h1M326 439h1"/>
<path stroke="#ffff00" d="M440 328h1M439 330h1M438 332h1"/>
<path stroke="#00ff00" d="M262 160h1M263 161h1M264 162h1M265 163h1M266 164h1M267 165h1M268 166h1M269 167h1M270 168h1M271 169h1M272 170h1M273 171h1M274 172h1M275 173h1M276 174h1M277 175h1M278 176h1M279 177h1M280 178h1M281 179h1M282 180h1M283 181h1M284 182h1M285 183h1M286 184h1M287 185h1M288 186h1M289 187h1M290 188h1M291 189h2M293 190h1M294 191h1M295 192h1M296 193h1M297 194h1M298 195h1M299 196h1M300 197h1M301 198h1M302 199h1M303 200h1M304 201h1M305 202h1M306 203h1M307 204h1M308 205h1M309 206h1M310 207h1M311 208h1M312 209h1M313 210h1M314 211h1M315 212h1M316 213h1M317 214h1M318 215h1M319 216h1M320 217h1M321 218h1M322 219h1M323 220h1M324 221h1M325 222h1M326 223h1M327 224h1M328 225h1M329 226h1M330 227h1M331 228h1M332 229h1M333 230h1M334 231h1M335 232h1M336 233h1M337 234h1M338 235h1M339 236h1M340 237h1M341 238h1M342 239h1M343 240h1M344 241h1M345 242h1M346 243h1M347 244h1M348 245h1M349 246h1M350 247h2M352 248h1M353 249h1M354 250h1M355 251h1M356 252h1M357 253h1M358 254h1M359 255h1M360 256h1M361 257h1M362 258h1M363 259h1M364 260h1M365 261h1M366 262h1M367 263h1M368 264h1M369 265h1M370 266h1M371 267h1M372 268h1M373 269h1M374 270h1M375 271h1M376 272h1M377 273h1M378 274h1M379 275h1M380 276h1M381 277h1M382 278h1M383 279h1M384 280h1M385 281h1M386 282h1M387 283h1M388 284h1M389 285h1M390 286h1M391 287h1M392 288h1M393 289h1M394 290h1M395 291h1M396 292h1M397 293h1M398 294h1M399 295h1M400 296h1M401 297h1M402 298h1M403 299h1M404 300h1M405 301h1M406 302h1M407 303h1M408 304h2M410 305h1M411 306h1M412 307h1M413 308h1M414 309h1M415 310h1M416 311h1M417 312h1M418 313h1M419 314h1M420 315h1M421 316h1M422 317h1M423 318h1M424 319h1M425 320h1M426 321h1M427 322h1M428 323h1M429 324h1M430 325h1M431 326h1M432 327h1M433 328h1M434 329h1M435 330h1M436 331h1M437 332h1M438 333h1"/>
<path stroke="#00ffff" d="M440 328h1M438 331h1M435 334h1M433 337h1M430 340h1M428 343h1M425 346h1M423 349h1M420 352h1M418 355h1M416 358h1M413 361h1M411 364h1M408 367h1M406 370h1M403 373h1M401 376h1M398 379h1M396 382h1M394 385h1M391 388h1M389 391h1M386 394h1M384 397h1M381 400h1M379 403h1M377 406h1M374 409h1M372 412h1M369 415h1M367 418h1M364 421h1M362 424h1M359 427h1M357 430h1"/>
<path stroke="#00ff00" d="M409 209h1M411 209h1M401 210h1M403 210h1M405 210h1M407 210h1M393 211h1M395 211h1M397 211h1M399 211h1M387 212h1M389 212h1M391 212h1M379 213h1M381 213h1M383 213h1M385 213h1M371 214h1M373 214h1M375 214h1M377 214h1M363 215h1M365 215h1M367 215h1M369 215h1M357 216h1M359 216h1M361 216h1M349 217h1M351 217h1M353 217h1M355 217h1M341 218h1M343 218h1M345 218h1M347 218h1M335 219h1M337 219h1M339 219h1M327 220h1M329 220h1M331 220h1M333 220h1M319 221h1M321 221h1M323 221h1M325 221h1M313 222h1M315 222h1M317 222h1M305 223h1M307 223h1M309 223h1M311 223h1M297 224h1M299 224h1M301 224h1M303 224h1M289 225h1M291 225h1M293 225h1M295 225h1M283 226h1M285 226h1M287 226h1M275 227h1M277 227h1M279 227h1M281 227h1M267 228h1M269 228h1M271 228h1M273 228h1M261 229h1M263 229h1M265 229h1M253 230h1M255 230h1M257 230h1M259 230h1M245 231h1M247 231h1M249 231h1M251 231h1M239 232h1M241 232h1M243 232h1M231 233h1M233 233h1M235 233h1M237 233h1M223 234h1M225 234h1M227 234h1M229 234h1M217 235h1M219 235h1M221 235h1M209 236h1M211 236h1M213 236h1M215 236h1M201 237h1M203 237h1M205 237h1M207 237h1M193 238h1M195 238h1M197 238h1M199 238h1M187 239h1M189 239h1M191 239h1M179 240h1M181 240h1M183 240h1M185 240h1M171 241h1M173 241h1M175 241h1M177 241h1M167 242h1M169 242h1"/>
<path stroke="#00ff00" d="M262 160h1M264 162h1M266 164h1M268 166h1M270 168h1M272 169h1M274 171h1M276 173h1M278 175h1M280 177h1M282 179h1M284 181h1M286 183h1M288 185h1M290 186h1M292 188h1M294 190h1M296 192h1M298 194h1M300 196h1M302 198h1M304 200h1M306 202h1M308 203h1M310 205h1M312 207h1M314 209h1M316 211h1M318 213h1M320 215h1M322 217h1M324 219h1M326 220h1M328 222h1M330 224h1M332 226h1M334 228h1M336 230h1M338 232h1M340 234h1M342 236h1M344 237h1M346 239h1M348 241h1M350 243h1M352 245h1M354 247h1M356 249h1M358 251h1M360 252h1M362 254h1M364 256h1M366 258h1M368 260h1M370 262h1M372 264h1M374 266h1M376 268h1M378 269h1M380 271h1M382 273h1M384 275h1M386 277h1M388 279h1M390 281h1M392 283h1M394 285h1M396 286h1M398 288h1M400 290h1M402 292h1M404 294h1M406 296h1M408 298h1M410 300h1M412 302h1M414 303h1M416 305h1M418 307h1M420 309h1M422 311h1M424 313h1M426 315h1M428 317h1M430 319h1M432 320h1M434 322h1M436 324h1M438 326h1M440 328h1"/>
<path stroke="#ff0000" d="M208 188h5M213 189h10M223 190h10M233 191h9M242 192h10M252 193h10M262 194h9M271 195h10M281 196h10M291 197h9M300 198h10M310 199h10M320 200h9M329 201h10M339 202h10M349 203h9M358 204h10M368 205h10M378 206h9M387 207h10M397 208h10M407 209h5"/>
<path stroke="#ff0000" d="M197 198h1M201 198h1M205 198h1M209 199h1M213 199h1M217 199h1M221 199h1M225 199h1M229 200h1M233 200h1M237 200h1M241 200h1M245 200h1M249 201h1M253 201h1M257 201h1M261 201h1M265 201h1M269 202h1M273 202h1M277 202h1M281 202h1M285 203h1M289 203h1M293 203h1M297 203h1M301 203h1M305 204h1M309 204h1M313 204h1M317 204h1M321 204h1M325 205h1M329 205h1M333 205h1M337 205h1M341 205h1M345 206h1M349 206h1M353 206h1M357 206h1M361 206h1M365 207h1M369 207h1M373 207h1M377 207h1M381 207h1M385 208h1M389 208h1M393 208h1M397 208h1M401 208h1M405 209h1M409 209h1"/>
<path stroke="#ffff00" d="M205 191h1M201 194h1M197 198h1"/>
<path stroke="#ffff00" d="M197 198h1M195 200h1M193 202h1"/>
<path stroke="#ff0000" d="M745 106h1M752 106h1M746 107h6M747 108h1M750 108h1M747 109h1M750 109h1M747 110h1M750 110h1M747 111h1M750 111h1M747 112h1M750 112h1M746 113h6M745 114h1M752 114h1"/>
<path stroke="#ffff00" d="M747 117h3M745 118h2M750 118h2M744 119h1M749 119h1M752 119h1M745 120h2M749 120h1M752 120h1M744 121h1M747 121h1M750 121h2M744 122h1M747 122h1M752 122h1M745 123h2M750 123h2M747 124h3"/>
<path stroke="#00ff00" d="M747 126h3M746 127h1M750 127h1M745 128h1M751 128h1M745 129h1M751 129h1M745 130h1M751 130h1M746 131h1M750 131h1M744 132h1M746 132h1M750 132h1M745 133h1M751 133h1M752 134h1"/>
<path stroke="#0000ff" d="M744 136h1M746 136h1M748 136h1M745 137h1M747 137h1M749 137h1M751 137h1M745 138h1M747 138h1M749 138h3M745 139h1M747 139h1M749 139h1M751 139h1M745 140h1M747 140h1M749 140h1M751 140h1M745 141h1M747 141h1M749 141h1M751 141h1M745 142h1M747 142h1M749 142h1M751 142h1M745 143h1M747 143h1M750 143h1M749 144h1M751 144h1"/>
<path stroke="#ff0000" d="M747 148h3M746 149h1M750 149h1M746 150h1M750 150h1M744 151h4M749 151h4M744 153h9"/>
<path stroke="#ffff00" d="M744 156h1M746 156h1M748 156h1M745 157h1M747 157h1M749 157h1M745 158h1M747 158h1M749 158h1M745 159h1M747 159h1M749 159h1M745 160h1M747 160h1M749 160h1M745 161h1M747 161h1M749 161h1M745 162h1M747 162h1M749 162h1M752 162h1M745 163h1M747 163h1M749 163h1M752 163h1M750 164h2"/>
<path stroke="#00ff00" d="M750 166h3M751 167h2M750 168h1M752 168h1M745 169h1M749 169h1M746 170h1M748 170h1M747 171h1M746 172h1M748 172h1M745 173h1M749 173h1M744 174h1"/>
<path stroke="#0000ff" d="M745 176h1M748 176h1M750 176h2M744 177h2M748 177h2M752 177h1M745 178h1M747 178h1M749 178h1M752 178h1M745 179h1M747 179h1M750 179h2M745 180h1M747 180h1M751 180h1M746 181h1M752 181h1M746 182h1M752 182h1M746 183h1M752 183h1M751 184h1"/>
<path stroke="#ff0000" d="M746 186h1M749 186h1M752 186h1M745 187h2M748 187h2M751 187h1M745 188h1M747 188h2M750 188h2M744 189h1M747 189h1M750 189h1M746 191h1M749 191h1M752 191h1M745 192h2M748 192h2M751 192h1M745 193h1M747 193h2M750 193h2M744 194h1M747 194h1M750 194h1"/>
<path stroke="#ffff00" d="M744 196h1M752 196h1M745 197h1M751 197h1M746 198h1M750 198h1M746 199h1M750 199h1M744 200h9M746 201h1M750 201h1M746 202h1M750 202h1M745 203h1M751 203h1M744 204h1M752 204h1"/>
<path stroke="#00ff00" d="M745 206h2M750 206h2M744 207h1M747 207h1M749 207h1M752 207h1M744 208h1M747 208h1M749 208h1M752 208h1M745 209h1M747 209h1M749 209h1M751 209h1M748 210h1M748 211h1M748 212h1M748 213h1M748 214h1"/>
<path stroke="#0000ff" d="M745 216h1M751 216h1M746 217h1M750 217h1M747 218h3M746 219h1M750 219h1M745 220h1M751 220h1M745 221h1M751 221h1M745 222h1M751 222h1M746 223h1M750 223h1M747 224h3"/>
<path stroke="#ff0000" d="M747 236h3M745 237h2M750 237h2M745 238h1M751 238h1M744 239h1M752 239h1M744 240h1M748 240h1M752 240h1M744 241h1M752 241h1M745 242h1M751 242h1M745 243h2M750 243h2M747 244h3"/>
<path stroke="#0000ff" d="M746 246h3M745 247h1M749 247h2M746 248h1M750 248h1M747 249h1M751 249h1M747 250h1M751 250h1M747 251h1M751 251h1M746 252h1M750 252h1M745 253h1M749 253h2M746 254h3"/>
<path stroke="#00ff00" d="M746 256h1M750 256h1M747 257h3M746 258h1M750 258h1M746 259h1M750 259h1M746 260h1M750 260h1M747 261h3M748 262h1M746 263h5M748 264h1"/>
<path stroke="#00ff00" d="M747 266h3M746 267h1M750 267h1M746 268h1M750 268h1M746 269h1M750 269h1M747 270h3M748 271h1M746 272h5M748 273h1M748 274h1"/>
<path stroke="#ff0000" d="M750 276h3M751 277h2M750 278h1M752 278h1M746 279h2M749 279h1M745 280h1M748 280h1M744 281h1M749 281h1M744 282h1M749 282h1M745 283h1M748 283h1M746 284h2"/>
<path stroke="#ff0000" d="M751 286h1M745 287h2M750 287h1M747 288h1M750 288h1M747 289h1M750 289h1M746 290h1M750 290h1M746 291h1M750 291h1M745 292h1M750 292h1M745 293h8M750 294h1"/>
<path stroke="#ffff00" d="M747 296h1M745 297h5M747 298h1M747 299h4M747 300h1M751 300h1M747 301h1M751 301h1M747 302h1M750 302h1M747 303h1M750 303h1M751 304h1"/>
<path stroke="#00ff00" d="M745 306h1M751 306h1M746 307h1M750 307h1M746 308h1M748 308h1M750 308h1M746 309h5M746 310h1M748 310h1M750 310h1M745 311h1M748 311h1M751 311h1M747 312h3M747 313h1M749 313h1M748 314h1"/>
<path stroke="#0000ff" d="M745 316h1M748 316h1M751 316h1M744 317h2M747 317h3M751 317h2M745 318h1M748 318h1M751 318h1M746 319h1M748 319h1M750 319h1M747 320h3M748 321h1M746 322h5M748 323h1M748 324h1"/>
<path stroke="#0000ff" d="M745 326h1M748 326h1M751 326h1M745 327h1M747 327h1M749 327h1M751 327h1M745 328h1M748 328h1M751 328h1M746 329h1M750 329h1M747 330h3M748 331h1M746 332h5M748 333h1M748 334h1"/>
<path stroke="#007f7f" d="M747 336h3M746 337h1M750 337h1M745 338h1M751 338h1M745 339h1M751 339h1M745 340h1M751 340h1M746 341h1M750 341h1M745 342h2M750 342h2M744 343h1M746 343h1M750 343h1M752 343h1M745 344h1M751 344h1"/>
<path stroke="#bfbfbf" d="M0 0h760M0 599h760"/>
</g>
<path stroke="#bfbfbf" d="M.5 0v600M759.5 0v600M599.5 0v600"/>
<g shape-rendering="auto" text-rendering="geometricPrecision" stroke="none" text-anchor="middle" font-family="'Liberation Sans', sans-serif" font-size="12.5">
<text transform="translate(94.5 348.0) scale(.83 1)" fill="#ff0000" stroke="#ff0000" stroke-width=".18">1</text>
<text transform="translate(131.5 429.0) scale(.83 1)" fill="#ffff00" stroke="#ffff00" stroke-width=".18">2</text>
<text transform="translate(203.5 491.0) scale(.83 1)" fill="#00ff00" stroke="#00ff00" stroke-width=".18">3</text>
<text transform="translate(310.5 513.0) scale(.83 1)" fill="#0000ff" stroke="#0000ff" stroke-width=".18">4</text>
<text transform="translate(426.5 470.0) scale(.83 1)" fill="#ff0000" stroke="#ff0000" stroke-width=".18">5</text>
<text transform="translate(499.5 366.0) scale(.83 1)" fill="#ffff00" stroke="#ffff00" stroke-width=".18">6</text>
<text transform="translate(504.5 260.0) scale(.83 1)" fill="#00ff00" stroke="#00ff00" stroke-width=".18">7</text>
<text transform="translate(467.5 179.0) scale(.83 1)" fill="#0000ff" stroke="#0000ff" stroke-width=".18">8</text>
<text transform="translate(395.5 117.0) scale(.83 1)" fill="#ff0000" stroke="#ff0000" stroke-width=".18">9</text>
<text transform="translate(284.5 95.0) scale(.83 1)" fill="#ffff00" stroke="#ffff00" stroke-width=".18">1</text>
<text transform="translate(292.5 95.0) scale(.83 1)" fill="#ffff00" stroke="#ffff00" stroke-width=".18">0</text>
<text transform="translate(168.5 138.0) scale(.83 1)" fill="#00ff00" stroke="#00ff00" stroke-width=".18">1</text>
<text transform="translate(176.5 138.0) scale(.83 1)" fill="#00ff00" stroke="#00ff00" stroke-width=".18">1</text>
<text transform="translate(95.5 242.0) scale(.83 1)" fill="#0000ff" stroke="#0000ff" stroke-width=".18">1</text>
<text transform="translate(103.5 242.0) scale(.83 1)" fill="#0000ff" stroke="#0000ff" stroke-width=".18">2</text>
<text transform="translate(119.6 307.9) scale(.475 1)" font-size="23.6" fill="#ff0000" fill-opacity=".8">Asc</text>
<text transform="translate(340.6 132.9) scale(.475 1)" font-size="23.6" fill="#ffff00" fill-opacity=".8">MC</text>
</g>
</svg>
<div id="info">
<div><span class="w">Astrolog 5.40</span></div>
<div>"alice425"</div>
<div>Sun April 25, 1971</div>
<div> 8:10am (ST +8:00 GMT)</div>
<div>"Tainan"</div>
<div>120°12E 23°00N</div>
<div>Placidus houses.</div>
<div>Tropical, Geocentric.</div>
<div>Julian Day = 2441066.5069</div>
<div></div>
<div><span class="r"> 1st house: </span><span class="g">16Gem29</span></div>
<div><span class="y"> 2nd house: </span><span class="b">11Can01</span></div>
<div><span class="g"> 3rd house: </span><span class="r"> 5Leo29</span></div>
<div><span class="b"> 4th house: </span><span class="y"> 3Vir07</span></div>
<div><span class="r"> 5th house: </span><span class="g"> 5Lib52</span></div>
<div><span class="y"> 6th house: </span><span class="b">11Sco59</span></div>
<div><span class="g"> 7th house: </span><span class="r">16Sag29</span></div>
<div><span class="b"> 8th house: </span><span class="y">11Cap01</span></div>
<div><span class="r"> 9th house: </span><span class="g"> 5Aqu29</span></div>
<div><span class="y">10th house: </span><span class="b"> 3Pis07</span></div>
<div><span class="g">11th house: </span><span class="r"> 5Ari52</span></div>
<div><span class="b">12th house: </span><span class="y">11Tau59</span></div>
<div></div>
<div><span class="r"> Sun: </span><span class="y"> 4Tau09</span>  - 0°00'</div>
<div><span class="b">Moon: </span><span class="y"> 1Tau55</span>  + 4°46'</div>
<div><span class="g">Merc: </span><span class="r">25Ari51</span><span class="w">R</span> + 0°19'</div>
<div><span class="g">Venu: </span><span class="r"> 1Ari37</span>  - 1°33'</div>
<div><span class="r">Mars: </span><span class="y">25Cap17</span>  - 1°11'</div>
<div><span class="r">Jupi: </span><span class="r"> 4Sag52</span><span class="w">R</span> + 1°01'</div>
<div><span class="y">Satu: </span><span class="y">23Tau04</span>  - 1°55'</div>
<div><span class="g">Uran: </span><span class="g">10Lib34</span><span class="w">R</span> + 0°43'</div>
<div><span class="b">Nept: </span><span class="r"> 2Sag26</span><span class="w">R</span> + 1°43'</div>
<div><span class="b">Plut: </span><span class="y">27Vir28</span><span class="w">R</span> +16°27'</div>
<div><span class="c">Node: </span><span class="g">19Aqu55</span><span class="w">R</span> + 0°00'</div>
<div></div>
<div>Fire: 4, Earth: 5,</div>
<div>Air : 3, Water: 1</div>
<div>Car: 4, Fix: 4, Mut: 5</div>
<div>Yang: 7, Yin: 6</div>
<div>M: 7, N: 4, A: 5, D: 6</div>
<div>Ang: 2, Suc: 5, Cad: 4</div>
<div>Learn: 7, Share: 6</div>
</div>
</body>
</html>
